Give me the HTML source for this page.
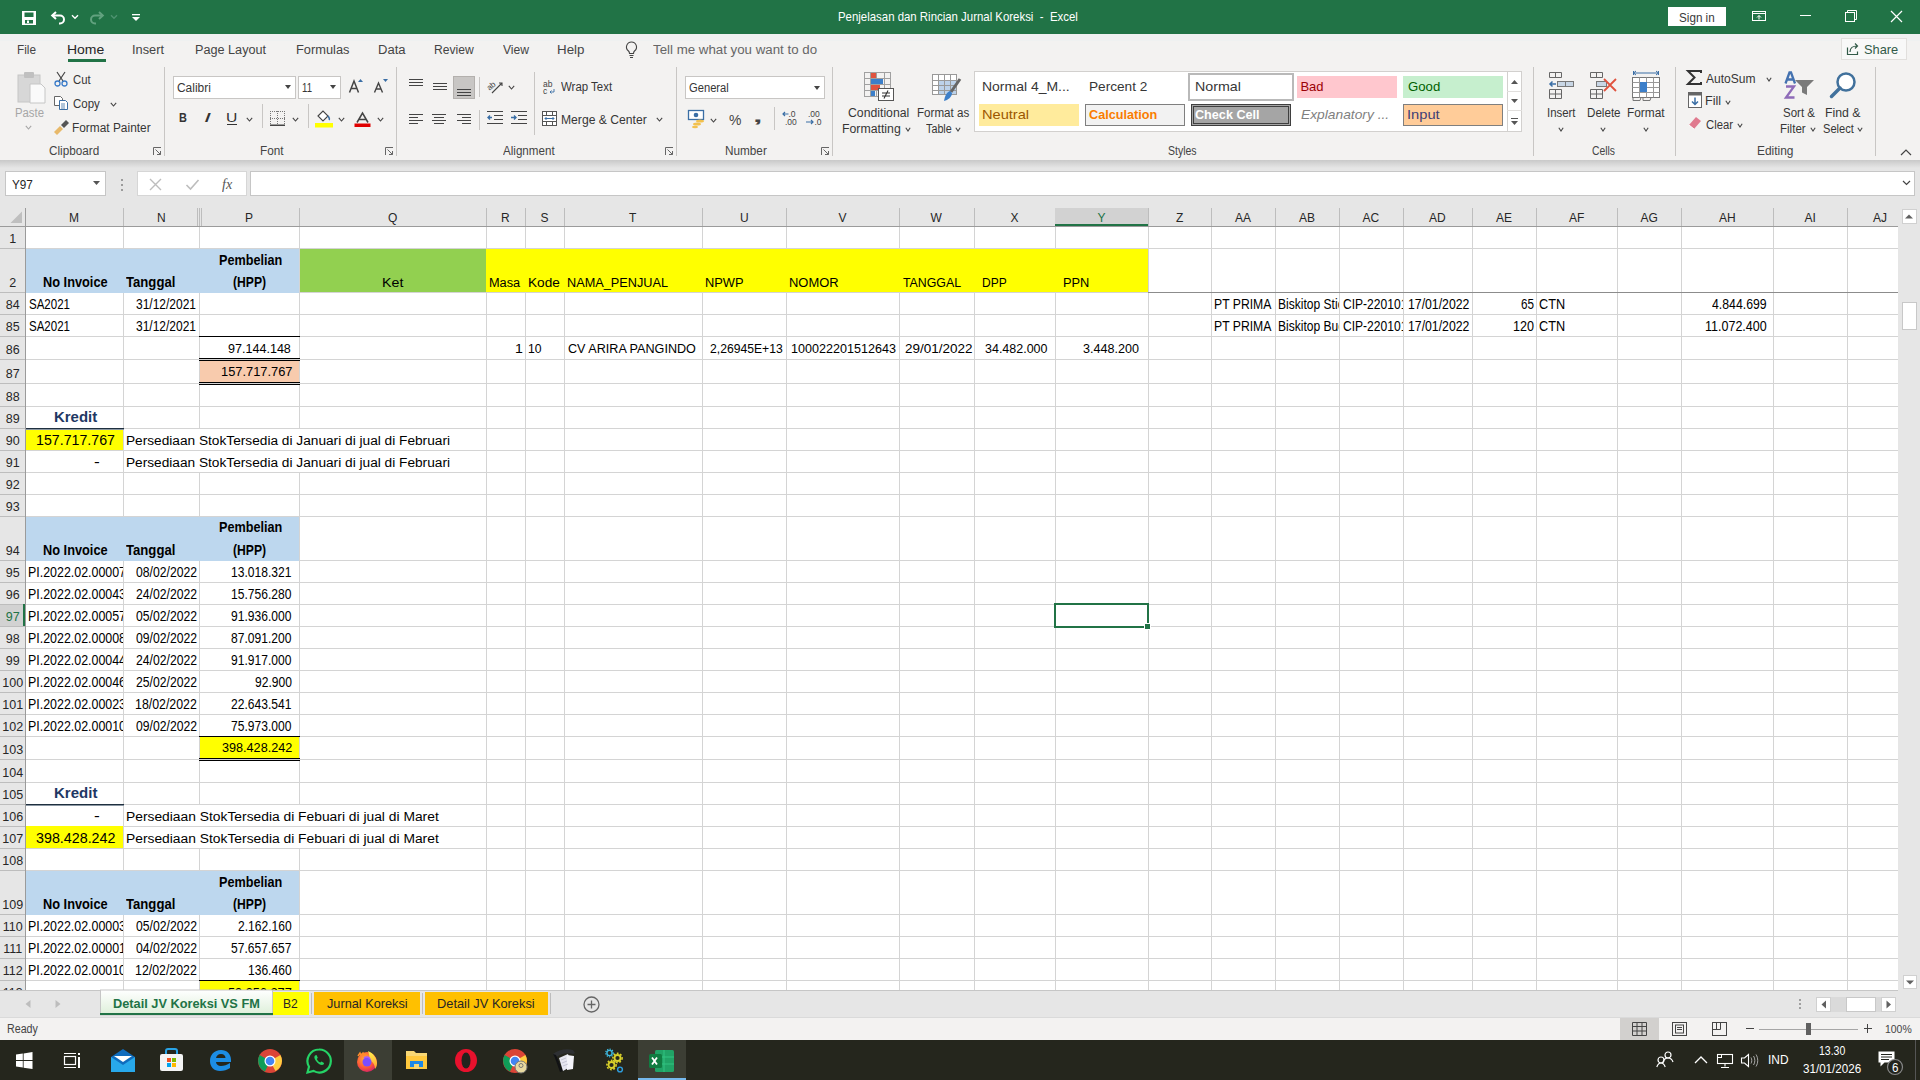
<!DOCTYPE html>
<html><head><meta charset="utf-8"><title>Excel</title>
<style>
html,body{margin:0;padding:0;}
body{width:1920px;height:1080px;overflow:hidden;position:relative;background:#fff;font-family:"Liberation Sans",sans-serif;}
.a{position:absolute;}
.t{white-space:pre;}
svg.a{overflow:visible;}
</style></head><body>
<div class="a" style="left:0px;top:0px;width:1920px;height:34px;background:#217346;"></div>
<div class="a" style="left:0px;top:34px;width:1920px;height:126px;background:#F3F2F1;"></div>
<div class="a" style="left:0px;top:34px;width:1920px;height:7px;background:#EFF1F1;"></div>
<svg class="a" style="left:22px;top:11px;" width="14" height="14" viewBox="0 0 14 14"><path d="M0 0h14v14H0z" fill="#fff"/><rect x="2.5" y="1.5" width="9" height="4.5" fill="#217346"/><rect x="3" y="9" width="8" height="3.5" fill="#217346"/><rect x="5" y="9.5" width="2" height="2.5" fill="#fff"/></svg>
<svg class="a" style="left:50px;top:10px;" width="16" height="16" viewBox="0 0 16 16"><path d="M2.5 5.5h7.5a4 4 0 0 1 0 8H9" fill="none" stroke="#fff" stroke-width="2"/><path d="M6 2L2.2 5.5 6 9" fill="none" stroke="#fff" stroke-width="2"/></svg>
<svg class="a" style="left:71px;top:14px;" width="8" height="6" viewBox="0 0 8 6"><path d="M1 1.2l3 3 3-3" fill="none" stroke="#fff" stroke-width="1.4"/></svg>
<svg class="a" style="left:89px;top:10px;" width="16" height="16" viewBox="0 0 16 16"><path d="M13.5 5.5H6a4 4 0 0 0 0 8h1" fill="none" stroke="#62A27F" stroke-width="2"/><path d="M10 2l3.8 3.5L10 9" fill="none" stroke="#62A27F" stroke-width="2"/></svg>
<svg class="a" style="left:110px;top:14px;" width="8" height="6" viewBox="0 0 8 6"><path d="M1 1.2l3 3 3-3" fill="none" stroke="#4E9270" stroke-width="1.4"/></svg>
<svg class="a" style="left:129px;top:11px;" width="14" height="14" viewBox="0 0 14 14"><rect x="3" y="3" width="8" height="1.3" fill="#fff"/><path d="M3 6h8l-4 4z" fill="#fff"/></svg>
<div class="a t" style="left:838.12px;top:9.89px;font-size:13px;line-height:13px;color:#fff;transform:scaleX(0.8779);transform-origin:left 0;">Penjelasan dan Rincian Jurnal Koreksi  -  Excel</div>
<div class="a" style="left:1668px;top:7px;width:58px;height:19px;background:#fff;"></div>
<div class="a t" style="left:1679.00px;top:10.89px;font-size:13px;line-height:13px;color:#3A3A3A;transform:scaleX(0.8983);transform-origin:left 0;">Sign in</div>
<svg class="a" style="left:1750px;top:9px;" width="18" height="14" viewBox="0 0 18 14"><rect x="2.5" y="2.5" width="13" height="9" fill="none" stroke="#fff" stroke-width="1"/><path d="M2.5 4.5h13" stroke="#fff"/><path d="M9 10.5v-4M7 8.5l2-2 2 2" fill="none" stroke="#fff" stroke-width="1"/></svg>
<div class="a" style="left:1800px;top:15px;width:11px;height:1px;background:#fff;"></div>
<svg class="a" style="left:1844px;top:9px;" width="14" height="14" viewBox="0 0 14 14"><rect x="1.5" y="3.5" width="9" height="9" fill="none" stroke="#fff"/><path d="M3.5 3.5v-2h9v9h-2" fill="none" stroke="#fff"/></svg>
<svg class="a" style="left:1890px;top:10px;" width="14" height="14" viewBox="0 0 14 14"><path d="M1 1l11 11M12 1L1 12" stroke="#fff" stroke-width="1.2"/></svg>
<div class="a t" style="left:16.56px;top:43.51px;font-size:12.5px;line-height:12.5px;color:#444;transform:scaleX(0.9432);transform-origin:left 0;">File</div>
<div class="a t" style="left:67.38px;top:43.51px;font-size:12.5px;line-height:12.5px;color:#262626;transform:scaleX(1.1176);transform-origin:left 0;">Home</div>
<div class="a" style="left:68px;top:59px;width:38px;height:3px;background:#217346;"></div>
<div class="a t" style="left:132.48px;top:43.51px;font-size:12.5px;line-height:12.5px;color:#444;transform:scaleX(1.0231);transform-origin:left 0;">Insert</div>
<div class="a t" style="left:194.99px;top:43.51px;font-size:12.5px;line-height:12.5px;color:#444;transform:scaleX(1.0126);transform-origin:left 0;">Page Layout</div>
<div class="a t" style="left:296.17px;top:43.51px;font-size:12.5px;line-height:12.5px;color:#444;transform:scaleX(1.0267);transform-origin:left 0;">Formulas</div>
<div class="a t" style="left:377.95px;top:43.51px;font-size:12.5px;line-height:12.5px;color:#444;transform:scaleX(1.0451);transform-origin:left 0;">Data</div>
<div class="a t" style="left:434.33px;top:43.51px;font-size:12.5px;line-height:12.5px;color:#444;transform:scaleX(0.9693);transform-origin:left 0;">Review</div>
<div class="a t" style="left:503.00px;top:43.51px;font-size:12.5px;line-height:12.5px;color:#444;transform:scaleX(0.9698);transform-origin:left 0;">View</div>
<div class="a t" style="left:556.93px;top:43.51px;font-size:12.5px;line-height:12.5px;color:#444;transform:scaleX(1.0664);transform-origin:left 0;">Help</div>
<svg class="a" style="left:624px;top:40px;" width="15" height="20" viewBox="0 0 15 20"><path d="M7.5 2a5 5 0 0 0-3 9c.8.7 1 1.5 1 2.5h4c0-1 .2-1.8 1-2.5a5 5 0 0 0-3-9z" fill="none" stroke="#444" stroke-width="1.1"/><path d="M5.5 15.5h4M6 17.5h3" stroke="#444" stroke-width="1.1"/></svg>
<div class="a t" style="left:653.40px;top:43.51px;font-size:12.5px;line-height:12.5px;color:#666;transform:scaleX(1.0635);transform-origin:left 0;">Tell me what you want to do</div>
<div class="a" style="left:1841px;top:38px;width:66px;height:22px;background:#F8F8F8;border:1px solid #E1DFDD;box-sizing:border-box;"></div>
<svg class="a" style="left:1846px;top:42px;" width="14" height="14" viewBox="0 0 14 14"><path d="M1.5 5.5v7h10v-3" fill="none" stroke="#325A48" stroke-width="1.2"/><path d="M4 10c0-4 3-6 7-6M9 1.5l2.5 2.5L9 6.5" fill="none" stroke="#325A48" stroke-width="1.2"/></svg>
<div class="a t" style="left:1864.00px;top:43.39px;font-size:13px;line-height:13px;color:#325A48;transform:scaleX(0.9867);transform-origin:left 0;">Share</div>
<svg class="a" style="left:15px;top:70px;" width="32" height="34" viewBox="0 0 32 34"><rect x="3" y="5" width="22" height="27" fill="#D7D7D7" stroke="#C6C6C6"/><rect x="9" y="2" width="10" height="6" rx="1" fill="#C0C0C0"/><path d="M15 14h11l4 4v15H15z" fill="#FAFAFA" stroke="#C6C6C6"/></svg>
<div class="a t" style="left:14.69px;top:106.81px;font-size:12.5px;line-height:12.5px;color:#A6A6A6;transform:scaleX(0.9061);transform-origin:left 0;">Paste</div>
<svg class="a" style="left:25px;top:125px;" width="7" height="5" viewBox="0 0 7 5"><path d="M0.8 0.8l2.7 3.2l2.7 -3.2" fill="none" stroke="#A6A6A6" stroke-width="1.1"/></svg>
<svg class="a" style="left:53px;top:71px;" width="16" height="16" viewBox="0 0 16 16"><path d="M4 1l6 9M12 1L6 10" stroke="#444" stroke-width="1.2"/><circle cx="4.5" cy="12.5" r="2.5" fill="none" stroke="#3A7BC8" stroke-width="1.3"/><circle cx="11.5" cy="12.5" r="2.5" fill="none" stroke="#3A7BC8" stroke-width="1.3"/></svg>
<div class="a t" style="left:72.50px;top:73.51px;font-size:12.5px;line-height:12.5px;color:#363636;transform:scaleX(0.9060);transform-origin:left 0;">Cut</div>
<svg class="a" style="left:53px;top:95px;" width="16" height="16" viewBox="0 0 16 16"><path d="M1.5 1.5h6l2 2v7h-8z" fill="#fff" stroke="#666"/><path d="M6.5 5.5h6l2 2v7h-8z" fill="#fff" stroke="#3A6EA5"/><path d="M8 9h4M8 11h4M8 13h4" stroke="#3A6EA5" stroke-width=".8"/></svg>
<div class="a t" style="left:72.50px;top:97.71px;font-size:12.5px;line-height:12.5px;color:#363636;transform:scaleX(0.9188);transform-origin:left 0;">Copy</div>
<svg class="a" style="left:110px;top:102px;" width="7" height="5" viewBox="0 0 7 5"><path d="M0.8 0.8l2.7 3.2l2.7 -3.2" fill="none" stroke="#444" stroke-width="1.1"/></svg>
<svg class="a" style="left:53px;top:119px;" width="17" height="16" viewBox="0 0 17 16"><path d="M1 13l6-6 3 3-6 6z" fill="#E8B96A"/><path d="M8 6l5-5 3 3-5 5z" fill="#555"/></svg>
<div class="a t" style="left:71.55px;top:121.71px;font-size:12.5px;line-height:12.5px;color:#363636;transform:scaleX(0.9509);transform-origin:left 0;">Format Painter</div>
<div class="a t" style="left:48.50px;top:145.41px;font-size:12.5px;line-height:12.5px;color:#444;transform:scaleX(0.9374);transform-origin:left 0;">Clipboard</div>
<svg class="a" style="left:153px;top:147px;" width="9" height="9" viewBox="0 0 9 9"><path d="M0.5 8V0.5H8" fill="none" stroke="#666"/><path d="M2.5 2.5l5 5M4 7.5h3.5V4" fill="none" stroke="#666"/></svg>
<div class="a" style="left:164px;top:67px;width:1px;height:89px;background:#C8C6C4;"></div>
<div class="a" style="left:173px;top:76px;width:123px;height:23px;background:#fff;border:1px solid #C8C6C4;box-sizing:border-box;"></div>
<div class="a t" style="left:176.60px;top:81.71px;font-size:12.5px;line-height:12.5px;color:#363636;transform:scaleX(0.9553);transform-origin:left 0;">Calibri</div>
<svg class="a" style="left:285px;top:85px;" width="7" height="5" viewBox="0 0 7 5"><path d="M0 0h6l-3 4z" fill="#444"/></svg>
<div class="a" style="left:298px;top:76px;width:43px;height:23px;background:#fff;border:1px solid #C8C6C4;box-sizing:border-box;"></div>
<div class="a t" style="left:301.90px;top:81.71px;font-size:12.5px;line-height:12.5px;color:#363636;transform:scaleX(0.7678);transform-origin:left 0;">11</div>
<svg class="a" style="left:330px;top:85px;" width="7" height="5" viewBox="0 0 7 5"><path d="M0 0h6l-3 4z" fill="#444"/></svg>
<svg class="a" style="left:348px;top:78px;" width="16" height="16" viewBox="0 0 16 16"><path d="M1.5 14.5L6 3l4.5 11.5M3.2 10.5h5.6" fill="none" stroke="#444" stroke-width="1.5"/><path d="M10 4l2.5-3 2.5 3z" fill="#3A6EA5"/></svg>
<svg class="a" style="left:373px;top:78px;" width="16" height="16" viewBox="0 0 16 16"><path d="M1.5 14.5L5.5 5l4 9.5M3 11h5" fill="none" stroke="#444" stroke-width="1.4"/><path d="M10 1l2.5 3 2.5-3z" fill="#3A6EA5"/></svg>
<div class="a t" style="left:179.40px;top:111.47px;font-size:13.5px;line-height:13.5px;color:#333;font-weight:700;transform:scaleX(0.8100);transform-origin:left 0;">B</div>
<div class="a t" style="left:203.70px;top:111.47px;font-size:13.5px;line-height:13.5px;color:#333;font-style:italic;transform:scaleX(1.8750);transform-origin:left 0;">I</div>
<div class="a t" style="left:225.74px;top:111.47px;font-size:13.5px;line-height:13.5px;color:#333;transform:scaleX(1.1625);transform-origin:left 0;">U</div>
<div class="a" style="left:227px;top:124px;width:10px;height:1.2px;background:#333;"></div>
<svg class="a" style="left:246px;top:117px;" width="7" height="5" viewBox="0 0 7 5"><path d="M0.8 0.8l2.7 3.2l2.7 -3.2" fill="none" stroke="#444" stroke-width="1.1"/></svg>
<div class="a" style="left:262px;top:104px;width:1px;height:24px;background:#C8C6C4;"></div>
<svg class="a" style="left:270px;top:111px;" width="15" height="15" viewBox="0 0 15 15"><rect x="0" y="0" width="1" height="1" fill="#777"/><rect x="0" y="7" width="1" height="1" fill="#777"/><rect x="0" y="0" width="1" height="1" fill="#777"/><rect x="7" y="0" width="1" height="1" fill="#777"/><rect x="14" y="0" width="1" height="1" fill="#777"/><rect x="2" y="0" width="1" height="1" fill="#777"/><rect x="2" y="7" width="1" height="1" fill="#777"/><rect x="0" y="2" width="1" height="1" fill="#777"/><rect x="7" y="2" width="1" height="1" fill="#777"/><rect x="14" y="2" width="1" height="1" fill="#777"/><rect x="4" y="0" width="1" height="1" fill="#777"/><rect x="4" y="7" width="1" height="1" fill="#777"/><rect x="0" y="4" width="1" height="1" fill="#777"/><rect x="7" y="4" width="1" height="1" fill="#777"/><rect x="14" y="4" width="1" height="1" fill="#777"/><rect x="6" y="0" width="1" height="1" fill="#777"/><rect x="6" y="7" width="1" height="1" fill="#777"/><rect x="0" y="6" width="1" height="1" fill="#777"/><rect x="7" y="6" width="1" height="1" fill="#777"/><rect x="14" y="6" width="1" height="1" fill="#777"/><rect x="8" y="0" width="1" height="1" fill="#777"/><rect x="8" y="7" width="1" height="1" fill="#777"/><rect x="0" y="8" width="1" height="1" fill="#777"/><rect x="7" y="8" width="1" height="1" fill="#777"/><rect x="14" y="8" width="1" height="1" fill="#777"/><rect x="10" y="0" width="1" height="1" fill="#777"/><rect x="10" y="7" width="1" height="1" fill="#777"/><rect x="0" y="10" width="1" height="1" fill="#777"/><rect x="7" y="10" width="1" height="1" fill="#777"/><rect x="14" y="10" width="1" height="1" fill="#777"/><rect x="12" y="0" width="1" height="1" fill="#777"/><rect x="12" y="7" width="1" height="1" fill="#777"/><rect x="0" y="12" width="1" height="1" fill="#777"/><rect x="7" y="12" width="1" height="1" fill="#777"/><rect x="14" y="12" width="1" height="1" fill="#777"/><rect x="14" y="0" width="1" height="1" fill="#777"/><rect x="14" y="7" width="1" height="1" fill="#777"/><rect x="0" y="14" width="1" height="1" fill="#777"/><rect x="7" y="14" width="1" height="1" fill="#777"/><rect x="14" y="14" width="1" height="1" fill="#777"/><rect x="0" y="13.5" width="15" height="1.5" fill="#444"/></svg>
<svg class="a" style="left:292px;top:117px;" width="7" height="5" viewBox="0 0 7 5"><path d="M0.8 0.8l2.7 3.2l2.7 -3.2" fill="none" stroke="#444" stroke-width="1.1"/></svg>
<div class="a" style="left:308px;top:104px;width:1px;height:24px;background:#C8C6C4;"></div>
<svg class="a" style="left:314px;top:110px;" width="20" height="18" viewBox="0 0 20 18"><path d="M4 6l5-5 5 5-5 5z" fill="#fff" stroke="#444" stroke-width="1.1"/><path d="M14 6c1.5 2 2 3 1 4" fill="none" stroke="#3A6EA5" stroke-width="1.5"/><rect x="1" y="13" width="18" height="4.5" fill="#FFFF00"/></svg>
<svg class="a" style="left:338px;top:117px;" width="7" height="5" viewBox="0 0 7 5"><path d="M0.8 0.8l2.7 3.2l2.7 -3.2" fill="none" stroke="#444" stroke-width="1.1"/></svg>
<svg class="a" style="left:354px;top:112px;" width="18" height="16" viewBox="0 0 18 16"><path d="M3 10.5L8.5 1l5.5 9.5M5 7.5h7" fill="none" stroke="#444" stroke-width="1.5"/><rect x="0.5" y="11.5" width="16" height="3.5" fill="#E00000"/></svg>
<svg class="a" style="left:377px;top:117px;" width="7" height="5" viewBox="0 0 7 5"><path d="M0.8 0.8l2.7 3.2l2.7 -3.2" fill="none" stroke="#444" stroke-width="1.1"/></svg>
<div class="a t" style="left:259.66px;top:145.41px;font-size:12.5px;line-height:12.5px;color:#444;transform:scaleX(0.9413);transform-origin:left 0;">Font</div>
<svg class="a" style="left:385px;top:147px;" width="9" height="9" viewBox="0 0 9 9"><path d="M0.5 8V0.5H8" fill="none" stroke="#666"/><path d="M2.5 2.5l5 5M4 7.5h3.5V4" fill="none" stroke="#666"/></svg>
<div class="a" style="left:396px;top:67px;width:1px;height:89px;background:#C8C6C4;"></div>
<svg class="a" style="left:409px;top:79px;" width="16" height="12" viewBox="0 0 16 12"><path d="M0 0.5h14" stroke="#444" stroke-width="1"/><path d="M0 3.5h14" stroke="#444" stroke-width="1"/><path d="M0 6.5h14" stroke="#444" stroke-width="1"/></svg>
<svg class="a" style="left:433px;top:83px;" width="16" height="12" viewBox="0 0 16 12"><path d="M0 0.5h14" stroke="#444" stroke-width="1"/><path d="M0 3.5h14" stroke="#444" stroke-width="1"/><path d="M0 6.5h14" stroke="#444" stroke-width="1"/></svg>
<div class="a" style="left:453px;top:76px;width:22px;height:23px;background:#C8C6C4;border:1px solid #B3B0AD;box-sizing:border-box;"></div>
<svg class="a" style="left:457px;top:89px;" width="16" height="12" viewBox="0 0 16 12"><path d="M0 0.5h14" stroke="#444" stroke-width="1"/><path d="M0 3.5h14" stroke="#444" stroke-width="1"/><path d="M0 6.5h14" stroke="#444" stroke-width="1"/></svg>
<div class="a" style="left:479px;top:77px;width:1px;height:20px;background:#C8C6C4;"></div>
<svg class="a" style="left:487px;top:79px;" width="17" height="16" viewBox="0 0 17 16"><text x="0" y="9" font-size="8" font-family="Liberation Sans" fill="#444" transform="rotate(-40 5 7)">ab</text><path d="M5 14l10-10M12 4h3v3" fill="none" stroke="#444" stroke-width="1.1"/></svg>
<svg class="a" style="left:508px;top:85px;" width="7" height="5" viewBox="0 0 7 5"><path d="M0.8 0.8l2.7 3.2l2.7 -3.2" fill="none" stroke="#444" stroke-width="1.1"/></svg>
<svg class="a" style="left:409px;top:114px;" width="16" height="12" viewBox="0 0 16 12"><path d="M0 0.5h14" stroke="#444" stroke-width="1"/><path d="M0 3.5h9" stroke="#444" stroke-width="1"/><path d="M0 6.5h14" stroke="#444" stroke-width="1"/><path d="M0 9.5h9" stroke="#444" stroke-width="1"/></svg>
<svg class="a" style="left:432px;top:114px;" width="16" height="12" viewBox="0 0 16 12"><path d="M0 0.5h14" stroke="#444" stroke-width="1"/><path d="M2 3.5h10" stroke="#444" stroke-width="1"/><path d="M0 6.5h14" stroke="#444" stroke-width="1"/><path d="M2 9.5h10" stroke="#444" stroke-width="1"/></svg>
<svg class="a" style="left:457px;top:114px;" width="16" height="12" viewBox="0 0 16 12"><path d="M0 0.5h14" stroke="#444" stroke-width="1"/><path d="M5 3.5h9" stroke="#444" stroke-width="1"/><path d="M0 6.5h14" stroke="#444" stroke-width="1"/><path d="M5 9.5h9" stroke="#444" stroke-width="1"/></svg>
<div class="a" style="left:479px;top:110px;width:1px;height:20px;background:#C8C6C4;"></div>
<svg class="a" style="left:487px;top:111px;" width="17" height="14" viewBox="0 0 17 14"><path d="M0 0.5h16M7 4.5h9M7 8.5h9M0 12.5h16" stroke="#444"/><path d="M5 6.5H1M3 4.5l-2 2 2 2" fill="none" stroke="#3A6EA5" stroke-width="1.4"/></svg>
<svg class="a" style="left:511px;top:111px;" width="17" height="14" viewBox="0 0 17 14"><path d="M0 0.5h16M7 4.5h9M7 8.5h9M0 12.5h16" stroke="#444"/><path d="M0 6.5h5M3 4.5l2 2-2 2" fill="none" stroke="#3A6EA5" stroke-width="1.4"/></svg>
<div class="a" style="left:534px;top:72px;width:1px;height:63px;background:#C8C6C4;"></div>
<svg class="a" style="left:543px;top:80px;" width="14" height="15" viewBox="0 0 14 15"><text x="0" y="7" font-size="8.5" font-family="Liberation Sans" fill="#444">ab</text><text x="0" y="14" font-size="8.5" font-family="Liberation Sans" fill="#444">c</text><path d="M11 9v3H7M8.5 10.5L7 12l1.5 1.5" fill="none" stroke="#3A6EA5" stroke-width=".9"/></svg>
<div class="a t" style="left:561.10px;top:81.21px;font-size:12.5px;line-height:12.5px;color:#363636;transform:scaleX(0.9158);transform-origin:left 0;">Wrap Text</div>
<svg class="a" style="left:542px;top:111px;" width="16" height="15" viewBox="0 0 16 15"><rect x="0.5" y="0.5" width="14" height="14" fill="#fff" stroke="#555"/><path d="M0.5 4.5h14M0.5 10.5h14M4.5 0.5v4M10.5 0.5v4M4.5 10.5v4M10.5 10.5v4" stroke="#555"/><path d="M3 7.5h9M4.5 6l-1.5 1.5 1.5 1.5M10.5 6l1.5 1.5-1.5 1.5" fill="none" stroke="#3A6EA5"/></svg>
<div class="a t" style="left:560.63px;top:113.51px;font-size:12.5px;line-height:12.5px;color:#363636;transform:scaleX(0.9716);transform-origin:left 0;">Merge &amp; Center</div>
<svg class="a" style="left:656px;top:117px;" width="7" height="5" viewBox="0 0 7 5"><path d="M0.8 0.8l2.7 3.2l2.7 -3.2" fill="none" stroke="#444" stroke-width="1.1"/></svg>
<div class="a t" style="left:502.50px;top:145.41px;font-size:12.5px;line-height:12.5px;color:#444;transform:scaleX(0.9285);transform-origin:left 0;">Alignment</div>
<svg class="a" style="left:665px;top:147px;" width="9" height="9" viewBox="0 0 9 9"><path d="M0.5 8V0.5H8" fill="none" stroke="#666"/><path d="M2.5 2.5l5 5M4 7.5h3.5V4" fill="none" stroke="#666"/></svg>
<div class="a" style="left:676px;top:67px;width:1px;height:89px;background:#C8C6C4;"></div>
<div class="a" style="left:685px;top:76px;width:140px;height:23px;background:#fff;border:1px solid #C8C6C4;box-sizing:border-box;"></div>
<div class="a t" style="left:688.70px;top:81.81px;font-size:12.5px;line-height:12.5px;color:#363636;transform:scaleX(0.8949);transform-origin:left 0;">General</div>
<svg class="a" style="left:814px;top:86px;" width="7" height="5" viewBox="0 0 7 5"><path d="M0 0h6l-3 4z" fill="#444"/></svg>
<svg class="a" style="left:688px;top:110px;" width="18" height="18" viewBox="0 0 18 18"><rect x="0.5" y="0.5" width="15" height="9" fill="#fff" stroke="#3A6EA5" stroke-width="1.3"/><circle cx="8" cy="5" r="2.3" fill="#3A6EA5"/><ellipse cx="12" cy="11" rx="4" ry="1.6" fill="#F2C14E"/><ellipse cx="9" cy="14" rx="4" ry="1.6" fill="#F2C14E"/><ellipse cx="7" cy="17" rx="3" ry="1.3" fill="#F2C14E"/></svg>
<svg class="a" style="left:710px;top:118px;" width="7" height="5" viewBox="0 0 7 5"><path d="M0.8 0.8l2.7 3.2l2.7 -3.2" fill="none" stroke="#444" stroke-width="1.1"/></svg>
<div class="a t" style="left:729.40px;top:112.92px;font-size:14.5px;line-height:14.5px;color:#444;transform:scaleX(0.9615);transform-origin:left 0;">%</div>
<div class="a t" style="left:752.87px;top:109.35px;font-size:16px;line-height:16px;color:#444;font-weight:700;transform:scaleX(2.1333);transform-origin:left 0;">,</div>
<div class="a" style="left:774px;top:107px;width:1px;height:23px;background:#C8C6C4;"></div>
<svg class="a" style="left:782px;top:110px;" width="17" height="16" viewBox="0 0 17 16"><text x="6.5" y="7" font-size="8.5" font-family="Liberation Sans" fill="#444">.0</text><text x="3" y="15" font-size="8.5" font-family="Liberation Sans" fill="#444">.00</text><path d="M6.5 4H1M3 2L1 4l2 2" fill="none" stroke="#3A6EA5" stroke-width="1.2"/></svg>
<svg class="a" style="left:805px;top:110px;" width="17" height="16" viewBox="0 0 17 16"><text x="3" y="7" font-size="8.5" font-family="Liberation Sans" fill="#444">.00</text><text x="9.5" y="15" font-size="8.5" font-family="Liberation Sans" fill="#444">.0</text><path d="M1 12h7M6 10l2 2-2 2" fill="none" stroke="#3A6EA5" stroke-width="1.2"/></svg>
<div class="a t" style="left:725.26px;top:145.41px;font-size:12.5px;line-height:12.5px;color:#444;transform:scaleX(0.9401);transform-origin:left 0;">Number</div>
<svg class="a" style="left:821px;top:147px;" width="9" height="9" viewBox="0 0 9 9"><path d="M0.5 8V0.5H8" fill="none" stroke="#666"/><path d="M2.5 2.5l5 5M4 7.5h3.5V4" fill="none" stroke="#666"/></svg>
<div class="a" style="left:832px;top:67px;width:1px;height:89px;background:#C8C6C4;"></div>
<svg class="a" style="left:863px;top:71px;" width="32" height="32" viewBox="0 0 32 32"><path d="M1 1.5h27M1 7.5h27M1 13.5h27M1 19.5h27M1 25.5h17M1.5 1v25M7.5 1v25M13.5 1v25M21.5 1v17M27.5 1v17" stroke="#A0A0A0" stroke-width="1"/><rect x="8" y="2" width="5" height="5" fill="#E0533F"/><rect x="8" y="8" width="12" height="5" fill="#3C7FC9"/><rect x="8" y="14" width="9" height="5" fill="#E0533F"/><rect x="8" y="20" width="4" height="5" fill="#3C7FC9"/><rect x="15.5" y="17.5" width="15" height="12" fill="#fff" stroke="#555"/><path d="M19 22h8M19 25h8M25 19.5l-4 8" stroke="#333" stroke-width="1.1"/></svg>
<div class="a t" style="left:847.80px;top:106.81px;font-size:12.5px;line-height:12.5px;color:#363636;transform:scaleX(0.9795);transform-origin:left 0;">Conditional</div>
<div class="a t" style="left:842.42px;top:122.51px;font-size:12.5px;line-height:12.5px;color:#363636;transform:scaleX(0.9832);transform-origin:left 0;">Formatting</div>
<svg class="a" style="left:905px;top:127px;" width="6" height="5" viewBox="0 0 6 5"><path d="M0.8 0.8l2.2 3.2l2.2 -3.2" fill="none" stroke="#444" stroke-width="1.1"/></svg>
<svg class="a" style="left:931px;top:73px;" width="32" height="30" viewBox="0 0 32 30"><rect x="1.5" y="1.5" width="24" height="20" fill="#fff" stroke="#999"/><rect x="7" y="7" width="18" height="14" fill="#BCD2EA"/><path d="M1.5 7.5h24M1.5 12.5h24M1.5 17.5h24M7.5 1.5v20M13.5 1.5v20M19.5 1.5v20" stroke="#999"/><path d="M29 6l-9 13" stroke="#666" stroke-width="3"/><path d="M19 18c-3 1-5 4-6 10 4-1 8-4 8-8z" fill="#3C7FC9"/></svg>
<div class="a t" style="left:917.47px;top:106.81px;font-size:12.5px;line-height:12.5px;color:#363636;transform:scaleX(0.9289);transform-origin:left 0;">Format as</div>
<div class="a t" style="left:926.20px;top:122.51px;font-size:12.5px;line-height:12.5px;color:#363636;transform:scaleX(0.8620);transform-origin:left 0;">Table</div>
<svg class="a" style="left:955px;top:127px;" width="6" height="5" viewBox="0 0 6 5"><path d="M0.8 0.8l2.2 3.2l2.2 -3.2" fill="none" stroke="#444" stroke-width="1.1"/></svg>
<div class="a" style="left:974px;top:71px;width:548px;height:61px;background:#fff;border:1px solid #D2D0CE;box-sizing:border-box;"></div>
<div class="a t" style="left:982.33px;top:79.89px;font-size:13px;line-height:13px;color:#363636;transform:scaleX(1.0747);transform-origin:left 0;">Normal 4_M...</div>
<div class="a t" style="left:1088.65px;top:79.89px;font-size:13px;line-height:13px;color:#363636;transform:scaleX(1.0475);transform-origin:left 0;">Percent 2</div>
<div class="a" style="left:1188px;top:73px;width:106px;height:28px;background:#fff;border:2px solid #B9B9B9;box-sizing:border-box;"></div>
<div class="a t" style="left:1194.51px;top:79.89px;font-size:13px;line-height:13px;color:#363636;transform:scaleX(1.0950);transform-origin:left 0;">Normal</div>
<div class="a" style="left:1297px;top:76px;width:100px;height:22px;background:#FFC7CE;"></div>
<div class="a t" style="left:1300.40px;top:79.89px;font-size:13px;line-height:13px;color:#9C0006;">Bad</div>
<div class="a" style="left:1403px;top:76px;width:100px;height:22px;background:#C6EFCE;"></div>
<div class="a t" style="left:1407.70px;top:79.89px;font-size:13px;line-height:13px;color:#006100;transform:scaleX(1.0136);transform-origin:left 0;">Good</div>
<div class="a" style="left:979px;top:104px;width:100px;height:22px;background:#FFEB9C;"></div>
<div class="a t" style="left:982.28px;top:108.39px;font-size:13px;line-height:13px;color:#9C5700;transform:scaleX(1.1239);transform-origin:left 0;">Neutral</div>
<div class="a" style="left:1085px;top:104px;width:100px;height:22px;background:#F2F2F2;border:1px solid #7F7F7F;box-sizing:border-box;"></div>
<div class="a t" style="left:1089.40px;top:108.39px;font-size:13px;line-height:13px;color:#FA7D00;font-weight:700;transform:scaleX(0.9740);transform-origin:left 0;">Calculation</div>
<div class="a" style="left:1191px;top:104px;width:100px;height:22px;background:#A5A5A5;border:3px double #3F3F3F;box-sizing:border-box;"></div>
<div class="a t" style="left:1195.00px;top:108.39px;font-size:13px;line-height:13px;color:#fff;font-weight:700;transform:scaleX(0.9717);transform-origin:left 0;">Check Cell</div>
<div class="a t" style="left:1301.40px;top:108.39px;font-size:13px;line-height:13px;color:#7F7F7F;font-style:italic;transform:scaleX(1.0608);transform-origin:left 0;">Explanatory ...</div>
<div class="a" style="left:1403px;top:104px;width:100px;height:22px;background:#FFCC99;border:1px solid #7F7F7F;box-sizing:border-box;"></div>
<div class="a t" style="left:1406.57px;top:108.39px;font-size:13px;line-height:13px;color:#3F3F76;transform:scaleX(1.1307);transform-origin:left 0;">Input</div>
<div class="a" style="left:1507px;top:71px;width:15px;height:61px;background:#fff;border:1px solid #D2D0CE;box-sizing:border-box;"></div>
<div class="a" style="left:1507px;top:91px;width:15px;height:1px;background:#E1DFDD;"></div>
<div class="a" style="left:1507px;top:110px;width:15px;height:1px;background:#E1DFDD;"></div>
<svg class="a" style="left:1511px;top:79px;" width="8" height="6" viewBox="0 0 8 6"><path d="M0 5h7L3.5 1z" fill="#555"/></svg>
<svg class="a" style="left:1511px;top:98px;" width="8" height="6" viewBox="0 0 8 6"><path d="M0 1h7L3.5 5z" fill="#555"/></svg>
<svg class="a" style="left:1511px;top:117px;" width="8" height="9" viewBox="0 0 8 9"><path d="M0 1.5h7" stroke="#555"/><path d="M0 4h7L3.5 8z" fill="#555"/></svg>
<div class="a t" style="left:1168.30px;top:145.41px;font-size:12.5px;line-height:12.5px;color:#444;transform:scaleX(0.8405);transform-origin:left 0;">Styles</div>
<div class="a" style="left:1533px;top:67px;width:1px;height:89px;background:#C8C6C4;"></div>
<svg class="a" style="left:1548px;top:71px;" width="28" height="28" viewBox="0 0 28 28"><path d="M1.5 1.5h12v5h-12zM7.5 1.5v5M1.5 18.5h12v9h-12zM1.5 23h12M7.5 18.5v9" fill="none" stroke="#666"/><rect x="9.5" y="10.5" width="16" height="5" fill="#C8D6E5" stroke="#777"/><path d="M17.5 10.5v5" stroke="#777"/><path d="M8 13H2M4.5 10.5L2 13l2.5 2.5" fill="none" stroke="#3A6EA5" stroke-width="1.5"/></svg>
<div class="a t" style="left:1546.59px;top:107.21px;font-size:12.5px;line-height:12.5px;color:#363636;transform:scaleX(0.9127);transform-origin:left 0;">Insert</div>
<svg class="a" style="left:1558px;top:127px;" width="6" height="5" viewBox="0 0 6 5"><path d="M0.8 0.8l2.2 3.2l2.2 -3.2" fill="none" stroke="#444" stroke-width="1.1"/></svg>
<svg class="a" style="left:1589px;top:71px;" width="32" height="28" viewBox="0 0 32 28"><path d="M1.5 1.5h12v5h-12zM7.5 1.5v5M1.5 18.5h12v9h-12zM1.5 23h12M7.5 18.5v9" fill="none" stroke="#666"/><rect x="7.5" y="10.5" width="10" height="5" fill="#C8D6E5" stroke="#777"/><path d="M15 8l12 12M27 8L15 20" stroke="#E0533F" stroke-width="1.8"/></svg>
<div class="a t" style="left:1586.57px;top:107.21px;font-size:12.5px;line-height:12.5px;color:#363636;transform:scaleX(0.9295);transform-origin:left 0;">Delete</div>
<svg class="a" style="left:1600px;top:127px;" width="6" height="5" viewBox="0 0 6 5"><path d="M0.8 0.8l2.2 3.2l2.2 -3.2" fill="none" stroke="#444" stroke-width="1.1"/></svg>
<svg class="a" style="left:1632px;top:70px;" width="28" height="32" viewBox="0 0 28 32"><path d="M1.5 3h25M1.5 1v4M26.5 1v4M4 1l-2.5 2L4 5M24 1l2.5 2L24 5" fill="none" stroke="#3A6EA5"/><rect x="0.5" y="7.5" width="27" height="20" fill="#fff" stroke="#777"/><path d="M0.5 12.5h27M0.5 17.5h27M0.5 22.5h27M7.5 7.5v20M14.5 7.5v20M21.5 7.5v20" stroke="#999"/><rect x="8" y="12" width="7" height="10" fill="#3C7FC9"/><path d="M1 27.5v3h7l1-3M11 27.5v3h7l1-3" fill="none" stroke="#777"/></svg>
<div class="a t" style="left:1626.55px;top:107.21px;font-size:12.5px;line-height:12.5px;color:#363636;transform:scaleX(0.9511);transform-origin:left 0;">Format</div>
<svg class="a" style="left:1643px;top:127px;" width="6" height="5" viewBox="0 0 6 5"><path d="M0.8 0.8l2.2 3.2l2.2 -3.2" fill="none" stroke="#444" stroke-width="1.1"/></svg>
<div class="a t" style="left:1592.40px;top:145.41px;font-size:12.5px;line-height:12.5px;color:#444;transform:scaleX(0.8281);transform-origin:left 0;">Cells</div>
<div class="a" style="left:1675px;top:67px;width:1px;height:89px;background:#C8C6C4;"></div>
<svg class="a" style="left:1687px;top:70px;" width="16" height="16" viewBox="0 0 16 16"><path d="M14 3V1H1l6.5 6.5L1 14h13v-2" fill="none" stroke="#333" stroke-width="2"/></svg>
<div class="a t" style="left:1706.20px;top:72.61px;font-size:12.5px;line-height:12.5px;color:#363636;transform:scaleX(0.9627);transform-origin:left 0;">AutoSum</div>
<svg class="a" style="left:1766px;top:77px;" width="6" height="5" viewBox="0 0 6 5"><path d="M0.8 0.8l2.2 3.2l2.2 -3.2" fill="none" stroke="#444" stroke-width="1.1"/></svg>
<svg class="a" style="left:1688px;top:92px;" width="15" height="17" viewBox="0 0 15 17"><rect x="0.5" y="0.5" width="13" height="15" fill="#fff" stroke="#666"/><rect x="0.5" y="0.5" width="13" height="3" fill="#666"/><path d="M7 5.5v7M4 9.5l3 3 3-3" fill="none" stroke="#3A6EA5" stroke-width="1.5"/></svg>
<div class="a t" style="left:1705.19px;top:95.31px;font-size:12.5px;line-height:12.5px;color:#363636;transform:scaleX(1.0078);transform-origin:left 0;">Fill</div>
<svg class="a" style="left:1725px;top:100px;" width="6" height="5" viewBox="0 0 6 5"><path d="M0.8 0.8l2.2 3.2l2.2 -3.2" fill="none" stroke="#444" stroke-width="1.1"/></svg>
<svg class="a" style="left:1688px;top:116px;" width="14" height="14" viewBox="0 0 14 14"><path d="M1 9l7-8 5 4-7 8z" fill="#E07A8F"/><path d="M1 9l5 4" stroke="#fff" stroke-width="1"/></svg>
<div class="a t" style="left:1706.20px;top:118.71px;font-size:12.5px;line-height:12.5px;color:#363636;transform:scaleX(0.9021);transform-origin:left 0;">Clear</div>
<svg class="a" style="left:1737px;top:123px;" width="6" height="5" viewBox="0 0 6 5"><path d="M0.8 0.8l2.2 3.2l2.2 -3.2" fill="none" stroke="#444" stroke-width="1.1"/></svg>
<svg class="a" style="left:1784px;top:71px;" width="31" height="29" viewBox="0 0 31 29"><path d="M1.5 12.5L5.5 1.5h1.5l4 11M3.2 8.5h6.2" fill="none" stroke="#4472B0" stroke-width="2.3"/><path d="M2 15.5h8l-8 11h8.5" fill="none" stroke="#8E6BB8" stroke-width="2.3"/><path d="M11 9h19l-7 7v8l-5-2.5V16z" fill="#7A7A7A"/></svg>
<div class="a t" style="left:1783.40px;top:107.21px;font-size:12.5px;line-height:12.5px;color:#363636;transform:scaleX(0.9210);transform-origin:left 0;">Sort &amp;</div>
<div class="a t" style="left:1780.48px;top:123.01px;font-size:12.5px;line-height:12.5px;color:#363636;transform:scaleX(0.9243);transform-origin:left 0;">Filter</div>
<svg class="a" style="left:1810px;top:127px;" width="6" height="5" viewBox="0 0 6 5"><path d="M0.8 0.8l2.2 3.2l2.2 -3.2" fill="none" stroke="#444" stroke-width="1.1"/></svg>
<svg class="a" style="left:1829px;top:71px;" width="29" height="28" viewBox="0 0 29 28"><circle cx="17" cy="11" r="8.5" fill="#fff" stroke="#41719C" stroke-width="2.5"/><path d="M11 17L2.5 25.5" stroke="#41719C" stroke-width="3.5" stroke-linecap="round"/></svg>
<div class="a t" style="left:1825.42px;top:107.21px;font-size:12.5px;line-height:12.5px;color:#363636;transform:scaleX(0.9835);transform-origin:left 0;">Find &amp;</div>
<div class="a t" style="left:1823.40px;top:123.01px;font-size:12.5px;line-height:12.5px;color:#363636;transform:scaleX(0.8875);transform-origin:left 0;">Select</div>
<svg class="a" style="left:1857px;top:127px;" width="6" height="5" viewBox="0 0 6 5"><path d="M0.8 0.8l2.2 3.2l2.2 -3.2" fill="none" stroke="#444" stroke-width="1.1"/></svg>
<div class="a t" style="left:1756.74px;top:145.41px;font-size:12.5px;line-height:12.5px;color:#444;transform:scaleX(0.9552);transform-origin:left 0;">Editing</div>
<div class="a" style="left:1875px;top:67px;width:1px;height:89px;background:#C8C6C4;"></div>
<svg class="a" style="left:1900px;top:149px;" width="12" height="7" viewBox="0 0 12 7"><path d="M1 6l5-5 5 5" fill="none" stroke="#444" stroke-width="1.2"/></svg>
<div class="a" style="left:0px;top:160px;width:1920px;height:48px;background:#E6E6E6;"></div>
<svg class="a" style="left:0px;top:160px;" width="1920" height="8" viewBox="0 0 1920 8"><defs><linearGradient id="sh" x1="0" y1="0" x2="0" y2="1"><stop offset="0" stop-color="#C9C9C9"/><stop offset="1" stop-color="#E6E6E6"/></linearGradient></defs><rect width="1920" height="8" fill="url(#sh)"/></svg>
<div class="a" style="left:5px;top:171px;width:101px;height:25px;background:#fff;border:1px solid #C6C6C6;box-sizing:border-box;"></div>
<div class="a t" style="left:12.30px;top:177.89px;font-size:13px;line-height:13px;color:#262626;transform:scaleX(0.9039);transform-origin:left 0;">Y97</div>
<svg class="a" style="left:93px;top:181px;" width="8" height="5" viewBox="0 0 8 5"><path d="M0 0h7L3.5 4z" fill="#555"/></svg>
<div class="a" style="left:121px;top:179px;width:2px;height:2px;background:#9B9B9B;"></div>
<div class="a" style="left:121px;top:184px;width:2px;height:2px;background:#9B9B9B;"></div>
<div class="a" style="left:121px;top:189px;width:2px;height:2px;background:#9B9B9B;"></div>
<div class="a" style="left:137px;top:171px;width:110px;height:25px;background:#fff;border:1px solid #D6D6D6;box-sizing:border-box;"></div>
<svg class="a" style="left:149px;top:178px;" width="13" height="13" viewBox="0 0 13 13"><path d="M1 1l11 11M12 1L1 12" stroke="#BDBDBD" stroke-width="1.4"/></svg>
<svg class="a" style="left:185px;top:178px;" width="15" height="13" viewBox="0 0 15 13"><path d="M1.5 7l4 4 8-9" fill="none" stroke="#BDBDBD" stroke-width="1.6"/></svg>
<div class="a t" style="left:222.40px;top:178.04px;font-size:14px;line-height:14px;color:#555;font-style:italic;font-family:'Liberation Serif';transform:scaleX(1.0101);transform-origin:left 0;">fx</div>
<div class="a" style="left:250px;top:171px;width:1665px;height:25px;background:#fff;border:1px solid #C6C6C6;box-sizing:border-box;"></div>
<svg class="a" style="left:1902px;top:180px;" width="9" height="6" viewBox="0 0 9 6"><path d="M1 1l3.5 3.5L8 1" fill="none" stroke="#444" stroke-width="1.2"/></svg>
<div class="a" style="left:0;top:208px;width:1920px;height:782px;overflow:hidden">
<div class="a" style="left:0;top:-208px;width:1920px;height:1080px">
<div class="a" style="left:123px;top:226px;width:1px;height:764px;background:#D4D4D4;"></div>
<div class="a" style="left:199px;top:226px;width:1px;height:764px;background:#D4D4D4;"></div>
<div class="a" style="left:299px;top:226px;width:1px;height:764px;background:#D4D4D4;"></div>
<div class="a" style="left:486px;top:226px;width:1px;height:764px;background:#D4D4D4;"></div>
<div class="a" style="left:525px;top:226px;width:1px;height:764px;background:#D4D4D4;"></div>
<div class="a" style="left:564px;top:226px;width:1px;height:764px;background:#D4D4D4;"></div>
<div class="a" style="left:702px;top:226px;width:1px;height:764px;background:#D4D4D4;"></div>
<div class="a" style="left:786px;top:226px;width:1px;height:764px;background:#D4D4D4;"></div>
<div class="a" style="left:899px;top:226px;width:1px;height:764px;background:#D4D4D4;"></div>
<div class="a" style="left:974px;top:226px;width:1px;height:764px;background:#D4D4D4;"></div>
<div class="a" style="left:1055px;top:226px;width:1px;height:764px;background:#D4D4D4;"></div>
<div class="a" style="left:1148px;top:226px;width:1px;height:764px;background:#D4D4D4;"></div>
<div class="a" style="left:1211px;top:226px;width:1px;height:764px;background:#D4D4D4;"></div>
<div class="a" style="left:1275px;top:226px;width:1px;height:764px;background:#D4D4D4;"></div>
<div class="a" style="left:1339px;top:226px;width:1px;height:764px;background:#D4D4D4;"></div>
<div class="a" style="left:1403px;top:226px;width:1px;height:764px;background:#D4D4D4;"></div>
<div class="a" style="left:1472px;top:226px;width:1px;height:764px;background:#D4D4D4;"></div>
<div class="a" style="left:1536px;top:226px;width:1px;height:764px;background:#D4D4D4;"></div>
<div class="a" style="left:1617px;top:226px;width:1px;height:764px;background:#D4D4D4;"></div>
<div class="a" style="left:1681px;top:226px;width:1px;height:764px;background:#D4D4D4;"></div>
<div class="a" style="left:1773px;top:226px;width:1px;height:764px;background:#D4D4D4;"></div>
<div class="a" style="left:1847px;top:226px;width:1px;height:764px;background:#D4D4D4;"></div>
<div class="a" style="left:25px;top:248px;width:1873px;height:1px;background:#D4D4D4;"></div>
<div class="a" style="left:25px;top:292px;width:1873px;height:1px;background:#D4D4D4;"></div>
<div class="a" style="left:25px;top:314px;width:1873px;height:1px;background:#D4D4D4;"></div>
<div class="a" style="left:25px;top:336px;width:1873px;height:1px;background:#D4D4D4;"></div>
<div class="a" style="left:25px;top:359px;width:1873px;height:1px;background:#D4D4D4;"></div>
<div class="a" style="left:25px;top:383px;width:1873px;height:1px;background:#D4D4D4;"></div>
<div class="a" style="left:25px;top:406px;width:1873px;height:1px;background:#D4D4D4;"></div>
<div class="a" style="left:25px;top:428px;width:1873px;height:1px;background:#D4D4D4;"></div>
<div class="a" style="left:25px;top:450px;width:1873px;height:1px;background:#D4D4D4;"></div>
<div class="a" style="left:25px;top:472px;width:1873px;height:1px;background:#D4D4D4;"></div>
<div class="a" style="left:25px;top:494px;width:1873px;height:1px;background:#D4D4D4;"></div>
<div class="a" style="left:25px;top:516px;width:1873px;height:1px;background:#D4D4D4;"></div>
<div class="a" style="left:25px;top:560px;width:1873px;height:1px;background:#D4D4D4;"></div>
<div class="a" style="left:25px;top:582px;width:1873px;height:1px;background:#D4D4D4;"></div>
<div class="a" style="left:25px;top:604px;width:1873px;height:1px;background:#D4D4D4;"></div>
<div class="a" style="left:25px;top:626px;width:1873px;height:1px;background:#D4D4D4;"></div>
<div class="a" style="left:25px;top:648px;width:1873px;height:1px;background:#D4D4D4;"></div>
<div class="a" style="left:25px;top:670px;width:1873px;height:1px;background:#D4D4D4;"></div>
<div class="a" style="left:25px;top:692px;width:1873px;height:1px;background:#D4D4D4;"></div>
<div class="a" style="left:25px;top:714px;width:1873px;height:1px;background:#D4D4D4;"></div>
<div class="a" style="left:25px;top:736px;width:1873px;height:1px;background:#D4D4D4;"></div>
<div class="a" style="left:25px;top:759px;width:1873px;height:1px;background:#D4D4D4;"></div>
<div class="a" style="left:25px;top:782px;width:1873px;height:1px;background:#D4D4D4;"></div>
<div class="a" style="left:25px;top:804px;width:1873px;height:1px;background:#D4D4D4;"></div>
<div class="a" style="left:25px;top:826px;width:1873px;height:1px;background:#D4D4D4;"></div>
<div class="a" style="left:25px;top:848px;width:1873px;height:1px;background:#D4D4D4;"></div>
<div class="a" style="left:25px;top:870px;width:1873px;height:1px;background:#D4D4D4;"></div>
<div class="a" style="left:25px;top:914px;width:1873px;height:1px;background:#D4D4D4;"></div>
<div class="a" style="left:25px;top:936px;width:1873px;height:1px;background:#D4D4D4;"></div>
<div class="a" style="left:25px;top:958px;width:1873px;height:1px;background:#D4D4D4;"></div>
<div class="a" style="left:25px;top:980px;width:1873px;height:1px;background:#D4D4D4;"></div>
<div class="a" style="left:25px;top:1002px;width:1873px;height:1px;background:#D4D4D4;"></div>
<div class="a" style="left:26px;top:249px;width:273px;height:44px;background:#BDD7EE;"></div>
<div class="a" style="left:26px;top:517px;width:273px;height:44px;background:#BDD7EE;"></div>
<div class="a" style="left:26px;top:871px;width:273px;height:44px;background:#BDD7EE;"></div>
<div class="a" style="left:300px;top:249px;width:186px;height:43px;background:#92D050;"></div>
<div class="a" style="left:486px;top:249px;width:662px;height:43px;background:#FFFF00;"></div>
<div class="a" style="left:1148px;top:292px;width:750px;height:1px;background:#8C8C8C;"></div>
<div class="a" style="left:199px;top:336px;width:101px;height:1px;background:#000;"></div>
<div class="a" style="left:199px;top:358px;width:101px;height:1px;background:#000;"></div>
<div class="a" style="left:199px;top:360px;width:101px;height:1px;background:#000;"></div>
<div class="a" style="left:200px;top:361px;width:99px;height:21px;background:#F8CBAD;"></div>
<div class="a" style="left:199px;top:382px;width:101px;height:1px;background:#000;"></div>
<div class="a" style="left:199px;top:384px;width:101px;height:1px;background:#000;"></div>
<div class="a" style="left:26px;top:429px;width:97px;height:21px;background:#FFFF00;"></div>
<div class="a" style="left:25px;top:428px;width:99px;height:1px;background:#1F2F3F;"></div>
<div class="a" style="left:25px;top:429px;width:99px;height:1px;background:#8A96A2;"></div>
<div class="a" style="left:199px;top:736px;width:101px;height:1px;background:#000;"></div>
<div class="a" style="left:200px;top:737px;width:99px;height:21px;background:#FFFF00;"></div>
<div class="a" style="left:199px;top:758px;width:101px;height:1px;background:#000;"></div>
<div class="a" style="left:199px;top:760px;width:101px;height:1px;background:#000;"></div>
<div class="a" style="left:25px;top:804px;width:99px;height:1px;background:#1F2F3F;"></div>
<div class="a" style="left:25px;top:805px;width:99px;height:1px;background:#8A96A2;"></div>
<div class="a" style="left:25px;top:826px;width:98px;height:22px;background:#FFFF00;"></div>
<div class="a" style="left:199px;top:980px;width:101px;height:1px;background:#000;"></div>
<div class="a" style="left:200px;top:981px;width:99px;height:12px;background:#FFFF00;"></div>
<div class="a t" style="left:228.46px;top:986.30px;font-size:13.7px;line-height:13.7px;color:#000;transform:scaleX(0.9300);transform-origin:left 0;">59.956.277</div>
<div class="a" style="left:124px;top:429px;width:362px;height:21px;background:#fff;"></div>
<div class="a" style="left:124px;top:451px;width:362px;height:21px;background:#fff;"></div>
<div class="a" style="left:124px;top:805px;width:362px;height:21px;background:#fff;"></div>
<div class="a" style="left:124px;top:827px;width:362px;height:21px;background:#fff;"></div>
<div class="a t" style="left:42.50px;top:275.47px;font-size:14.67px;line-height:14.67px;color:#000;font-weight:700;transform:scaleX(0.8721);transform-origin:left 0;">No Invoice</div>
<div class="a t" style="left:126.20px;top:275.47px;font-size:14.67px;line-height:14.67px;color:#000;font-weight:700;transform:scaleX(0.8960);transform-origin:left 0;">Tanggal</div>
<div class="a t" style="left:219.20px;top:252.97px;font-size:14.67px;line-height:14.67px;color:#000;font-weight:700;transform:scaleX(0.8629);transform-origin:left 0;">Pembelian</div>
<div class="a t" style="left:233.00px;top:275.47px;font-size:14.67px;line-height:14.67px;color:#000;font-weight:700;transform:scaleX(0.8297);transform-origin:left 0;">(HPP)</div>
<div class="a t" style="left:42.50px;top:542.97px;font-size:14.67px;line-height:14.67px;color:#000;font-weight:700;transform:scaleX(0.8721);transform-origin:left 0;">No Invoice</div>
<div class="a t" style="left:126.20px;top:542.97px;font-size:14.67px;line-height:14.67px;color:#000;font-weight:700;transform:scaleX(0.8960);transform-origin:left 0;">Tanggal</div>
<div class="a t" style="left:219.20px;top:520.47px;font-size:14.67px;line-height:14.67px;color:#000;font-weight:700;transform:scaleX(0.8629);transform-origin:left 0;">Pembelian</div>
<div class="a t" style="left:233.00px;top:542.97px;font-size:14.67px;line-height:14.67px;color:#000;font-weight:700;transform:scaleX(0.8297);transform-origin:left 0;">(HPP)</div>
<div class="a t" style="left:42.50px;top:896.77px;font-size:14.67px;line-height:14.67px;color:#000;font-weight:700;transform:scaleX(0.8721);transform-origin:left 0;">No Invoice</div>
<div class="a t" style="left:126.20px;top:896.77px;font-size:14.67px;line-height:14.67px;color:#000;font-weight:700;transform:scaleX(0.8960);transform-origin:left 0;">Tanggal</div>
<div class="a t" style="left:219.20px;top:874.97px;font-size:14.67px;line-height:14.67px;color:#000;font-weight:700;transform:scaleX(0.8629);transform-origin:left 0;">Pembelian</div>
<div class="a t" style="left:233.00px;top:896.77px;font-size:14.67px;line-height:14.67px;color:#000;font-weight:700;transform:scaleX(0.8297);transform-origin:left 0;">(HPP)</div>
<div class="a t" style="left:382.16px;top:276.30px;font-size:13.7px;line-height:13.7px;color:#000;transform:scaleX(1.0384);transform-origin:left 0;">Ket</div>
<div class="a t" style="left:488.77px;top:275.50px;font-size:13.7px;line-height:13.7px;color:#000;transform:scaleX(0.9313);transform-origin:left 0;">Masa</div>
<div class="a t" style="left:527.71px;top:275.50px;font-size:13.7px;line-height:13.7px;color:#000;transform:scaleX(0.9949);transform-origin:left 0;">Kode</div>
<div class="a t" style="left:566.87px;top:275.50px;font-size:13.7px;line-height:13.7px;color:#000;transform:scaleX(0.9292);transform-origin:left 0;">NAMA_PENJUAL</div>
<div class="a t" style="left:704.86px;top:275.50px;font-size:13.7px;line-height:13.7px;color:#000;transform:scaleX(0.9391);transform-origin:left 0;">NPWP</div>
<div class="a t" style="left:788.65px;top:275.50px;font-size:13.7px;line-height:13.7px;color:#000;transform:scaleX(0.9461);transform-origin:left 0;">NOMOR</div>
<div class="a t" style="left:902.80px;top:275.50px;font-size:13.7px;line-height:13.7px;color:#000;transform:scaleX(0.9015);transform-origin:left 0;">TANGGAL</div>
<div class="a t" style="left:981.82px;top:275.50px;font-size:13.7px;line-height:13.7px;color:#000;transform:scaleX(0.8773);transform-origin:left 0;">DPP</div>
<div class="a t" style="left:1062.76px;top:275.50px;font-size:13.7px;line-height:13.7px;color:#000;transform:scaleX(0.9368);transform-origin:left 0;">PPN</div>
<div class="a t" style="left:28.50px;top:297.17px;font-size:14.2px;line-height:14.2px;color:#000;transform:scaleX(0.8123);transform-origin:left 0;">SA2021</div>
<div class="a t" style="left:135.60px;top:297.17px;font-size:14.2px;line-height:14.2px;color:#000;transform:scaleX(0.8451);transform-origin:left 0;">31/12/2021</div>
<div class="a t" style="left:1213.74px;top:297.17px;font-size:14.2px;line-height:14.2px;color:#000;transform:scaleX(0.8596);transform-origin:left 0;">PT PRIMA</div>
<div class="a" style="left:1276px;top:292.8px;width:63px;height:20px;overflow:hidden">
<div class="a" style="left:-1276px;top:-292.8px;width:1920px;height:1080px">
<div class="a t" style="left:1277.55px;top:297.17px;font-size:14.2px;line-height:14.2px;color:#000;transform:scaleX(0.8500);transform-origin:left 0;">Biskitop Stick</div>
</div></div>
<div class="a" style="left:1340px;top:292.8px;width:63px;height:20px;overflow:hidden">
<div class="a" style="left:-1340px;top:-292.8px;width:1920px;height:1080px">
<div class="a t" style="left:1342.50px;top:297.17px;font-size:14.2px;line-height:14.2px;color:#000;transform:scaleX(0.8500);transform-origin:left 0;">CIP-220101</div>
</div></div>
<div class="a t" style="left:1408.14px;top:297.17px;font-size:14.2px;line-height:14.2px;color:#000;transform:scaleX(0.8643);transform-origin:left 0;">17/01/2022</div>
<div class="a t" style="left:1520.60px;top:297.17px;font-size:14.2px;line-height:14.2px;color:#000;transform:scaleX(0.8244);transform-origin:left 0;">65</div>
<div class="a t" style="left:1539.40px;top:297.17px;font-size:14.2px;line-height:14.2px;color:#000;transform:scaleX(0.8958);transform-origin:left 0;">CTN</div>
<div class="a t" style="left:1712.20px;top:297.17px;font-size:14.2px;line-height:14.2px;color:#000;transform:scaleX(0.8652);transform-origin:left 0;">4.844.699</div>
<div class="a t" style="left:28.50px;top:318.97px;font-size:14.2px;line-height:14.2px;color:#000;transform:scaleX(0.8123);transform-origin:left 0;">SA2021</div>
<div class="a t" style="left:135.60px;top:318.97px;font-size:14.2px;line-height:14.2px;color:#000;transform:scaleX(0.8451);transform-origin:left 0;">31/12/2021</div>
<div class="a t" style="left:1213.74px;top:318.97px;font-size:14.2px;line-height:14.2px;color:#000;transform:scaleX(0.8596);transform-origin:left 0;">PT PRIMA</div>
<div class="a" style="left:1276px;top:314.6px;width:63px;height:20px;overflow:hidden">
<div class="a" style="left:-1276px;top:-314.6px;width:1920px;height:1080px">
<div class="a t" style="left:1277.55px;top:318.97px;font-size:14.2px;line-height:14.2px;color:#000;transform:scaleX(0.8500);transform-origin:left 0;">Biskitop Buck</div>
</div></div>
<div class="a" style="left:1340px;top:314.6px;width:63px;height:20px;overflow:hidden">
<div class="a" style="left:-1340px;top:-314.6px;width:1920px;height:1080px">
<div class="a t" style="left:1342.50px;top:318.97px;font-size:14.2px;line-height:14.2px;color:#000;transform:scaleX(0.8500);transform-origin:left 0;">CIP-220101</div>
</div></div>
<div class="a t" style="left:1408.14px;top:318.97px;font-size:14.2px;line-height:14.2px;color:#000;transform:scaleX(0.8643);transform-origin:left 0;">17/01/2022</div>
<div class="a t" style="left:1512.61px;top:318.97px;font-size:14.2px;line-height:14.2px;color:#000;transform:scaleX(0.8867);transform-origin:left 0;">120</div>
<div class="a t" style="left:1539.40px;top:318.97px;font-size:14.2px;line-height:14.2px;color:#000;transform:scaleX(0.8958);transform-origin:left 0;">CTN</div>
<div class="a t" style="left:1705.12px;top:318.97px;font-size:14.2px;line-height:14.2px;color:#000;transform:scaleX(0.8818);transform-origin:left 0;">11.072.400</div>
<div class="a t" style="left:228.40px;top:341.60px;font-size:13.7px;line-height:13.7px;color:#000;transform:scaleX(0.9174);transform-origin:left 0;">97.144.148</div>
<div class="a t" style="left:515.27px;top:341.60px;font-size:13.7px;line-height:13.7px;color:#000;transform:scaleX(1.0333);transform-origin:left 0;">1</div>
<div class="a t" style="left:527.81px;top:341.60px;font-size:13.7px;line-height:13.7px;color:#000;transform:scaleX(0.8897);transform-origin:left 0;">10</div>
<div class="a t" style="left:567.50px;top:341.60px;font-size:13.7px;line-height:13.7px;color:#000;transform:scaleX(0.9206);transform-origin:left 0;">CV ARIRA PANGINDO</div>
<div class="a t" style="left:710.00px;top:341.60px;font-size:13.7px;line-height:13.7px;color:#000;transform:scaleX(0.8879);transform-origin:left 0;">2,26945E+13</div>
<div class="a t" style="left:791.28px;top:341.60px;font-size:13.7px;line-height:13.7px;color:#000;transform:scaleX(0.9184);transform-origin:left 0;">100022201512643</div>
<div class="a t" style="left:904.70px;top:341.60px;font-size:13.7px;line-height:13.7px;color:#000;transform:scaleX(0.9839);transform-origin:left 0;">29/01/2022</div>
<div class="a t" style="left:985.00px;top:341.60px;font-size:13.7px;line-height:13.7px;color:#000;transform:scaleX(0.9116);transform-origin:left 0;">34.482.000</div>
<div class="a t" style="left:1083.40px;top:341.60px;font-size:13.7px;line-height:13.7px;color:#000;transform:scaleX(0.9187);transform-origin:left 0;">3.448.200</div>
<div class="a t" style="left:220.96px;top:365.40px;font-size:13.7px;line-height:13.7px;color:#000;transform:scaleX(0.9395);transform-origin:left 0;">157.717.767</div>
<div class="a t" style="left:53.70px;top:409.77px;font-size:14.67px;line-height:14.67px;color:#1F3864;font-weight:700;transform:scaleX(1.0197);transform-origin:left 0;">Kredit</div>
<div class="a t" style="left:53.70px;top:785.77px;font-size:14.67px;line-height:14.67px;color:#1F3864;font-weight:700;transform:scaleX(1.0244);transform-origin:left 0;">Kredit</div>
<div class="a t" style="left:36.33px;top:432.77px;font-size:14.67px;line-height:14.67px;color:#000;transform:scaleX(0.9695);transform-origin:left 0;">157.717.767</div>
<div class="a t" style="left:125.90px;top:433.80px;font-size:13.7px;line-height:13.7px;color:#000;">Persediaan StokTersedia di Januari di jual di Februari</div>
<div class="a t" style="left:94.40px;top:454.77px;font-size:14.67px;line-height:14.67px;color:#000;transform:scaleX(1.1800);transform-origin:left 0;">-</div>
<div class="a t" style="left:125.90px;top:455.80px;font-size:13.7px;line-height:13.7px;color:#000;">Persediaan StokTersedia di Januari di jual di Februari</div>
<div class="a t" style="left:94.40px;top:809.47px;font-size:14.67px;line-height:14.67px;color:#000;transform:scaleX(1.1800);transform-origin:left 0;">-</div>
<div class="a t" style="left:125.89px;top:809.80px;font-size:13.7px;line-height:13.7px;color:#000;transform:scaleX(1.0099);transform-origin:left 0;">Persediaan StokTersedia di Febuari di jual di Maret</div>
<div class="a t" style="left:36.20px;top:831.47px;font-size:14.67px;line-height:14.67px;color:#000;transform:scaleX(0.9748);transform-origin:left 0;">398.428.242</div>
<div class="a t" style="left:125.89px;top:831.80px;font-size:13.7px;line-height:13.7px;color:#000;transform:scaleX(1.0099);transform-origin:left 0;">Persediaan StokTersedia di Febuari di jual di Maret</div>
<div class="a" style="left:26px;top:561px;width:97px;height:21px;overflow:hidden">
<div class="a" style="left:-26px;top:-561px;width:1920px;height:1080px">
<div class="a t" style="left:27.93px;top:564.97px;font-size:14.2px;line-height:14.2px;color:#000;transform:scaleX(0.8750);transform-origin:left 0;">PI.2022.02.00007</div>
</div></div>
<div class="a t" style="left:135.60px;top:564.97px;font-size:14.2px;line-height:14.2px;color:#000;transform:scaleX(0.8592);transform-origin:left 0;">08/02/2022</div>
<div class="a t" style="left:231.45px;top:564.97px;font-size:14.2px;line-height:14.2px;color:#000;transform:scaleX(0.8500);transform-origin:left 0;">13.018.321</div>
<div class="a" style="left:26px;top:583px;width:97px;height:21px;overflow:hidden">
<div class="a" style="left:-26px;top:-583px;width:1920px;height:1080px">
<div class="a t" style="left:27.93px;top:586.97px;font-size:14.2px;line-height:14.2px;color:#000;transform:scaleX(0.8750);transform-origin:left 0;">PI.2022.02.00043</div>
</div></div>
<div class="a t" style="left:135.60px;top:586.97px;font-size:14.2px;line-height:14.2px;color:#000;transform:scaleX(0.8592);transform-origin:left 0;">24/02/2022</div>
<div class="a t" style="left:231.45px;top:586.97px;font-size:14.2px;line-height:14.2px;color:#000;transform:scaleX(0.8500);transform-origin:left 0;">15.756.280</div>
<div class="a" style="left:26px;top:605px;width:97px;height:21px;overflow:hidden">
<div class="a" style="left:-26px;top:-605px;width:1920px;height:1080px">
<div class="a t" style="left:27.93px;top:608.97px;font-size:14.2px;line-height:14.2px;color:#000;transform:scaleX(0.8750);transform-origin:left 0;">PI.2022.02.00057</div>
</div></div>
<div class="a t" style="left:135.60px;top:608.97px;font-size:14.2px;line-height:14.2px;color:#000;transform:scaleX(0.8592);transform-origin:left 0;">05/02/2022</div>
<div class="a t" style="left:231.45px;top:608.97px;font-size:14.2px;line-height:14.2px;color:#000;transform:scaleX(0.8500);transform-origin:left 0;">91.936.000</div>
<div class="a" style="left:26px;top:627px;width:97px;height:21px;overflow:hidden">
<div class="a" style="left:-26px;top:-627px;width:1920px;height:1080px">
<div class="a t" style="left:27.93px;top:630.97px;font-size:14.2px;line-height:14.2px;color:#000;transform:scaleX(0.8750);transform-origin:left 0;">PI.2022.02.00008</div>
</div></div>
<div class="a t" style="left:135.60px;top:630.97px;font-size:14.2px;line-height:14.2px;color:#000;transform:scaleX(0.8592);transform-origin:left 0;">09/02/2022</div>
<div class="a t" style="left:231.45px;top:630.97px;font-size:14.2px;line-height:14.2px;color:#000;transform:scaleX(0.8500);transform-origin:left 0;">87.091.200</div>
<div class="a" style="left:26px;top:649px;width:97px;height:21px;overflow:hidden">
<div class="a" style="left:-26px;top:-649px;width:1920px;height:1080px">
<div class="a t" style="left:27.93px;top:652.97px;font-size:14.2px;line-height:14.2px;color:#000;transform:scaleX(0.8750);transform-origin:left 0;">PI.2022.02.00044</div>
</div></div>
<div class="a t" style="left:135.60px;top:652.97px;font-size:14.2px;line-height:14.2px;color:#000;transform:scaleX(0.8592);transform-origin:left 0;">24/02/2022</div>
<div class="a t" style="left:231.45px;top:652.97px;font-size:14.2px;line-height:14.2px;color:#000;transform:scaleX(0.8500);transform-origin:left 0;">91.917.000</div>
<div class="a" style="left:26px;top:671px;width:97px;height:21px;overflow:hidden">
<div class="a" style="left:-26px;top:-671px;width:1920px;height:1080px">
<div class="a t" style="left:27.93px;top:674.97px;font-size:14.2px;line-height:14.2px;color:#000;transform:scaleX(0.8750);transform-origin:left 0;">PI.2022.02.00046</div>
</div></div>
<div class="a t" style="left:135.60px;top:674.97px;font-size:14.2px;line-height:14.2px;color:#000;transform:scaleX(0.8592);transform-origin:left 0;">25/02/2022</div>
<div class="a t" style="left:254.92px;top:674.97px;font-size:14.2px;line-height:14.2px;color:#000;transform:scaleX(0.8500);transform-origin:left 0;">92.900</div>
<div class="a" style="left:26px;top:693px;width:97px;height:21px;overflow:hidden">
<div class="a" style="left:-26px;top:-693px;width:1920px;height:1080px">
<div class="a t" style="left:27.93px;top:696.97px;font-size:14.2px;line-height:14.2px;color:#000;transform:scaleX(0.8750);transform-origin:left 0;">PI.2022.02.00023</div>
</div></div>
<div class="a t" style="left:134.73px;top:696.97px;font-size:14.2px;line-height:14.2px;color:#000;transform:scaleX(0.8714);transform-origin:left 0;">18/02/2022</div>
<div class="a t" style="left:231.45px;top:696.97px;font-size:14.2px;line-height:14.2px;color:#000;transform:scaleX(0.8500);transform-origin:left 0;">22.643.541</div>
<div class="a" style="left:26px;top:715px;width:97px;height:21px;overflow:hidden">
<div class="a" style="left:-26px;top:-715px;width:1920px;height:1080px">
<div class="a t" style="left:27.93px;top:718.97px;font-size:14.2px;line-height:14.2px;color:#000;transform:scaleX(0.8750);transform-origin:left 0;">PI.2022.02.00010</div>
</div></div>
<div class="a t" style="left:135.60px;top:718.97px;font-size:14.2px;line-height:14.2px;color:#000;transform:scaleX(0.8592);transform-origin:left 0;">09/02/2022</div>
<div class="a t" style="left:231.45px;top:718.97px;font-size:14.2px;line-height:14.2px;color:#000;transform:scaleX(0.8500);transform-origin:left 0;">75.973.000</div>
<div class="a" style="left:26px;top:915px;width:97px;height:21px;overflow:hidden">
<div class="a" style="left:-26px;top:-915px;width:1920px;height:1080px">
<div class="a t" style="left:27.93px;top:918.97px;font-size:14.2px;line-height:14.2px;color:#000;transform:scaleX(0.8750);transform-origin:left 0;">PI.2022.02.00003</div>
</div></div>
<div class="a t" style="left:135.60px;top:918.97px;font-size:14.2px;line-height:14.2px;color:#000;transform:scaleX(0.8592);transform-origin:left 0;">05/02/2022</div>
<div class="a t" style="left:238.16px;top:918.97px;font-size:14.2px;line-height:14.2px;color:#000;transform:scaleX(0.8500);transform-origin:left 0;">2.162.160</div>
<div class="a" style="left:26px;top:937px;width:97px;height:21px;overflow:hidden">
<div class="a" style="left:-26px;top:-937px;width:1920px;height:1080px">
<div class="a t" style="left:27.93px;top:940.97px;font-size:14.2px;line-height:14.2px;color:#000;transform:scaleX(0.8750);transform-origin:left 0;">PI.2022.02.00001</div>
</div></div>
<div class="a t" style="left:135.60px;top:940.97px;font-size:14.2px;line-height:14.2px;color:#000;transform:scaleX(0.8592);transform-origin:left 0;">04/02/2022</div>
<div class="a t" style="left:231.45px;top:940.97px;font-size:14.2px;line-height:14.2px;color:#000;transform:scaleX(0.8500);transform-origin:left 0;">57.657.657</div>
<div class="a" style="left:26px;top:959px;width:97px;height:21px;overflow:hidden">
<div class="a" style="left:-26px;top:-959px;width:1920px;height:1080px">
<div class="a t" style="left:27.93px;top:962.97px;font-size:14.2px;line-height:14.2px;color:#000;transform:scaleX(0.8750);transform-origin:left 0;">PI.2022.02.00010</div>
</div></div>
<div class="a t" style="left:134.73px;top:962.97px;font-size:14.2px;line-height:14.2px;color:#000;transform:scaleX(0.8714);transform-origin:left 0;">12/02/2022</div>
<div class="a t" style="left:248.22px;top:962.97px;font-size:14.2px;line-height:14.2px;color:#000;transform:scaleX(0.8500);transform-origin:left 0;">136.460</div>
<div class="a t" style="left:221.90px;top:741.30px;font-size:13.7px;line-height:13.7px;color:#000;transform:scaleX(0.9231);transform-origin:left 0;">398.428.242</div>
</div></div>
<div class="a" style="left:0px;top:208px;width:1898px;height:18px;background:#E6E6E6;"></div>
<div class="a" style="left:0px;top:226px;width:25px;height:764px;background:#E6E6E6;"></div>
<svg class="a" style="left:9px;top:211px;" width="14" height="13" viewBox="0 0 14 13"><path d="M13 0.5V12H1.5z" fill="#BFBFBF"/></svg>
<div class="a" style="left:123px;top:208px;width:1px;height:18px;background:#BDBDBD;"></div>
<div class="a t" style="left:69.00px;top:211.94px;font-size:12px;line-height:12px;color:#262626;">M</div>
<div class="a" style="left:199px;top:208px;width:1px;height:18px;background:#BDBDBD;"></div>
<div class="a t" style="left:157.00px;top:211.94px;font-size:12px;line-height:12px;color:#262626;">N</div>
<div class="a" style="left:299px;top:208px;width:1px;height:18px;background:#BDBDBD;"></div>
<div class="a t" style="left:245.00px;top:211.94px;font-size:12px;line-height:12px;color:#262626;">P</div>
<div class="a" style="left:486px;top:208px;width:1px;height:18px;background:#BDBDBD;"></div>
<div class="a t" style="left:388.00px;top:211.94px;font-size:12px;line-height:12px;color:#262626;">Q</div>
<div class="a" style="left:525px;top:208px;width:1px;height:18px;background:#BDBDBD;"></div>
<div class="a t" style="left:501.00px;top:211.94px;font-size:12px;line-height:12px;color:#262626;">R</div>
<div class="a" style="left:564px;top:208px;width:1px;height:18px;background:#BDBDBD;"></div>
<div class="a t" style="left:540.50px;top:211.94px;font-size:12px;line-height:12px;color:#262626;">S</div>
<div class="a" style="left:702px;top:208px;width:1px;height:18px;background:#BDBDBD;"></div>
<div class="a t" style="left:629.00px;top:211.94px;font-size:12px;line-height:12px;color:#262626;">T</div>
<div class="a" style="left:786px;top:208px;width:1px;height:18px;background:#BDBDBD;"></div>
<div class="a t" style="left:740.00px;top:211.94px;font-size:12px;line-height:12px;color:#262626;">U</div>
<div class="a" style="left:899px;top:208px;width:1px;height:18px;background:#BDBDBD;"></div>
<div class="a t" style="left:838.50px;top:211.94px;font-size:12px;line-height:12px;color:#262626;">V</div>
<div class="a" style="left:974px;top:208px;width:1px;height:18px;background:#BDBDBD;"></div>
<div class="a t" style="left:930.50px;top:211.94px;font-size:12px;line-height:12px;color:#262626;">W</div>
<div class="a" style="left:1055px;top:208px;width:1px;height:18px;background:#BDBDBD;"></div>
<div class="a t" style="left:1010.50px;top:211.94px;font-size:12px;line-height:12px;color:#262626;">X</div>
<div class="a" style="left:1055px;top:208px;width:93px;height:18px;background:#D2D2D2;"></div>
<div class="a" style="left:1055px;top:224px;width:93px;height:2px;background:#217346;"></div>
<div class="a" style="left:1148px;top:208px;width:1px;height:18px;background:#BDBDBD;"></div>
<div class="a t" style="left:1097.50px;top:211.94px;font-size:12px;line-height:12px;color:#217346;">Y</div>
<div class="a" style="left:1211px;top:208px;width:1px;height:18px;background:#BDBDBD;"></div>
<div class="a t" style="left:1176.00px;top:211.94px;font-size:12px;line-height:12px;color:#262626;">Z</div>
<div class="a" style="left:1275px;top:208px;width:1px;height:18px;background:#BDBDBD;"></div>
<div class="a t" style="left:1235.00px;top:211.94px;font-size:12px;line-height:12px;color:#262626;">AA</div>
<div class="a" style="left:1339px;top:208px;width:1px;height:18px;background:#BDBDBD;"></div>
<div class="a t" style="left:1299.00px;top:211.94px;font-size:12px;line-height:12px;color:#262626;">AB</div>
<div class="a" style="left:1403px;top:208px;width:1px;height:18px;background:#BDBDBD;"></div>
<div class="a t" style="left:1362.50px;top:211.94px;font-size:12px;line-height:12px;color:#262626;">AC</div>
<div class="a" style="left:1472px;top:208px;width:1px;height:18px;background:#BDBDBD;"></div>
<div class="a t" style="left:1429.00px;top:211.94px;font-size:12px;line-height:12px;color:#262626;">AD</div>
<div class="a" style="left:1536px;top:208px;width:1px;height:18px;background:#BDBDBD;"></div>
<div class="a t" style="left:1496.00px;top:211.94px;font-size:12px;line-height:12px;color:#262626;">AE</div>
<div class="a" style="left:1617px;top:208px;width:1px;height:18px;background:#BDBDBD;"></div>
<div class="a t" style="left:1569.00px;top:211.94px;font-size:12px;line-height:12px;color:#262626;">AF</div>
<div class="a" style="left:1681px;top:208px;width:1px;height:18px;background:#BDBDBD;"></div>
<div class="a t" style="left:1640.50px;top:211.94px;font-size:12px;line-height:12px;color:#262626;">AG</div>
<div class="a" style="left:1773px;top:208px;width:1px;height:18px;background:#BDBDBD;"></div>
<div class="a t" style="left:1719.00px;top:211.94px;font-size:12px;line-height:12px;color:#262626;">AH</div>
<div class="a" style="left:1847px;top:208px;width:1px;height:18px;background:#BDBDBD;"></div>
<div class="a t" style="left:1804.50px;top:211.94px;font-size:12px;line-height:12px;color:#262626;">AI</div>
<div class="a t" style="left:1873.00px;top:211.94px;font-size:12px;line-height:12px;color:#262626;">AJ</div>
<div class="a" style="left:197px;top:208px;width:1px;height:18px;background:#BDBDBD;"></div>
<div class="a" style="left:201px;top:208px;width:1px;height:18px;background:#BDBDBD;"></div>
<div class="a" style="left:0px;top:226px;width:1898px;height:1px;background:#9B9B9B;"></div>
<div class="a" style="left:25px;top:208px;width:1px;height:782px;background:#9B9B9B;"></div>
<div class="a" style="left:0;top:226px;width:25px;height:764px;overflow:hidden"><div class="a" style="left:0;top:-226px;width:25px;height:1080px">
<div class="a" style="left:0px;top:248px;width:25px;height:1px;background:#BDBDBD;"></div>
<div class="a t" style="left:9.20px;top:232.51px;font-size:12.5px;line-height:12.5px;color:#262626;">1</div>
<div class="a" style="left:0px;top:292px;width:25px;height:1px;background:#BDBDBD;"></div>
<div class="a t" style="left:9.20px;top:276.51px;font-size:12.5px;line-height:12.5px;color:#262626;">2</div>
<div class="a" style="left:0px;top:314px;width:25px;height:1px;background:#BDBDBD;"></div>
<div class="a t" style="left:5.72px;top:298.51px;font-size:12.5px;line-height:12.5px;color:#262626;">84</div>
<div class="a" style="left:0px;top:336px;width:25px;height:1px;background:#BDBDBD;"></div>
<div class="a t" style="left:5.72px;top:320.51px;font-size:12.5px;line-height:12.5px;color:#262626;">85</div>
<div class="a" style="left:0px;top:359px;width:25px;height:1px;background:#BDBDBD;"></div>
<div class="a t" style="left:5.72px;top:343.51px;font-size:12.5px;line-height:12.5px;color:#262626;">86</div>
<div class="a" style="left:0px;top:383px;width:25px;height:1px;background:#BDBDBD;"></div>
<div class="a t" style="left:5.72px;top:367.51px;font-size:12.5px;line-height:12.5px;color:#262626;">87</div>
<div class="a" style="left:0px;top:406px;width:25px;height:1px;background:#BDBDBD;"></div>
<div class="a t" style="left:5.72px;top:390.51px;font-size:12.5px;line-height:12.5px;color:#262626;">88</div>
<div class="a" style="left:0px;top:428px;width:25px;height:1px;background:#BDBDBD;"></div>
<div class="a t" style="left:5.72px;top:412.51px;font-size:12.5px;line-height:12.5px;color:#262626;">89</div>
<div class="a" style="left:0px;top:450px;width:25px;height:1px;background:#BDBDBD;"></div>
<div class="a t" style="left:5.72px;top:434.51px;font-size:12.5px;line-height:12.5px;color:#262626;">90</div>
<div class="a" style="left:0px;top:472px;width:25px;height:1px;background:#BDBDBD;"></div>
<div class="a t" style="left:5.72px;top:456.51px;font-size:12.5px;line-height:12.5px;color:#262626;">91</div>
<div class="a" style="left:0px;top:494px;width:25px;height:1px;background:#BDBDBD;"></div>
<div class="a t" style="left:5.72px;top:478.51px;font-size:12.5px;line-height:12.5px;color:#262626;">92</div>
<div class="a" style="left:0px;top:516px;width:25px;height:1px;background:#BDBDBD;"></div>
<div class="a t" style="left:5.72px;top:500.51px;font-size:12.5px;line-height:12.5px;color:#262626;">93</div>
<div class="a" style="left:0px;top:560px;width:25px;height:1px;background:#BDBDBD;"></div>
<div class="a t" style="left:5.72px;top:544.51px;font-size:12.5px;line-height:12.5px;color:#262626;">94</div>
<div class="a" style="left:0px;top:582px;width:25px;height:1px;background:#BDBDBD;"></div>
<div class="a t" style="left:5.72px;top:566.51px;font-size:12.5px;line-height:12.5px;color:#262626;">95</div>
<div class="a" style="left:0px;top:604px;width:25px;height:1px;background:#BDBDBD;"></div>
<div class="a t" style="left:5.72px;top:588.51px;font-size:12.5px;line-height:12.5px;color:#262626;">96</div>
<div class="a" style="left:0px;top:605px;width:25px;height:21px;background:#D2D2D2;"></div>
<div class="a" style="left:23px;top:604px;width:2px;height:22px;background:#217346;"></div>
<div class="a" style="left:0px;top:626px;width:25px;height:1px;background:#BDBDBD;"></div>
<div class="a t" style="left:5.72px;top:610.51px;font-size:12.5px;line-height:12.5px;color:#217346;">97</div>
<div class="a" style="left:0px;top:648px;width:25px;height:1px;background:#BDBDBD;"></div>
<div class="a t" style="left:5.72px;top:632.51px;font-size:12.5px;line-height:12.5px;color:#262626;">98</div>
<div class="a" style="left:0px;top:670px;width:25px;height:1px;background:#BDBDBD;"></div>
<div class="a t" style="left:5.72px;top:654.51px;font-size:12.5px;line-height:12.5px;color:#262626;">99</div>
<div class="a" style="left:0px;top:692px;width:25px;height:1px;background:#BDBDBD;"></div>
<div class="a t" style="left:2.25px;top:676.51px;font-size:12.5px;line-height:12.5px;color:#262626;">100</div>
<div class="a" style="left:0px;top:714px;width:25px;height:1px;background:#BDBDBD;"></div>
<div class="a t" style="left:2.25px;top:698.51px;font-size:12.5px;line-height:12.5px;color:#262626;">101</div>
<div class="a" style="left:0px;top:736px;width:25px;height:1px;background:#BDBDBD;"></div>
<div class="a t" style="left:2.25px;top:720.51px;font-size:12.5px;line-height:12.5px;color:#262626;">102</div>
<div class="a" style="left:0px;top:759px;width:25px;height:1px;background:#BDBDBD;"></div>
<div class="a t" style="left:2.25px;top:743.51px;font-size:12.5px;line-height:12.5px;color:#262626;">103</div>
<div class="a" style="left:0px;top:782px;width:25px;height:1px;background:#BDBDBD;"></div>
<div class="a t" style="left:2.25px;top:766.51px;font-size:12.5px;line-height:12.5px;color:#262626;">104</div>
<div class="a" style="left:0px;top:804px;width:25px;height:1px;background:#BDBDBD;"></div>
<div class="a t" style="left:2.25px;top:788.51px;font-size:12.5px;line-height:12.5px;color:#262626;">105</div>
<div class="a" style="left:0px;top:826px;width:25px;height:1px;background:#BDBDBD;"></div>
<div class="a t" style="left:2.25px;top:810.51px;font-size:12.5px;line-height:12.5px;color:#262626;">106</div>
<div class="a" style="left:0px;top:848px;width:25px;height:1px;background:#BDBDBD;"></div>
<div class="a t" style="left:2.25px;top:832.51px;font-size:12.5px;line-height:12.5px;color:#262626;">107</div>
<div class="a" style="left:0px;top:870px;width:25px;height:1px;background:#BDBDBD;"></div>
<div class="a t" style="left:2.25px;top:854.51px;font-size:12.5px;line-height:12.5px;color:#262626;">108</div>
<div class="a" style="left:0px;top:914px;width:25px;height:1px;background:#BDBDBD;"></div>
<div class="a t" style="left:2.25px;top:898.51px;font-size:12.5px;line-height:12.5px;color:#262626;">109</div>
<div class="a" style="left:0px;top:936px;width:25px;height:1px;background:#BDBDBD;"></div>
<div class="a t" style="left:2.71px;top:920.51px;font-size:12.5px;line-height:12.5px;color:#262626;">110</div>
<div class="a" style="left:0px;top:958px;width:25px;height:1px;background:#BDBDBD;"></div>
<div class="a t" style="left:3.18px;top:942.51px;font-size:12.5px;line-height:12.5px;color:#262626;">111</div>
<div class="a" style="left:0px;top:980px;width:25px;height:1px;background:#BDBDBD;"></div>
<div class="a t" style="left:2.71px;top:964.51px;font-size:12.5px;line-height:12.5px;color:#262626;">112</div>
<div class="a" style="left:0px;top:1002px;width:25px;height:1px;background:#BDBDBD;"></div>
<div class="a t" style="left:2.71px;top:986.51px;font-size:12.5px;line-height:12.5px;color:#262626;">113</div>
</div></div>
<div class="a" style="left:1054px;top:603px;width:95px;height:2px;background:#217346;"></div>
<div class="a" style="left:1054px;top:603px;width:2px;height:25px;background:#217346;"></div>
<div class="a" style="left:1054px;top:626px;width:90px;height:2px;background:#217346;"></div>
<div class="a" style="left:1147px;top:603px;width:2px;height:20px;background:#217346;"></div>
<div class="a" style="left:1144px;top:623px;width:7px;height:7px;background:#fff;"></div>
<div class="a" style="left:1145px;top:624px;width:5px;height:5px;background:#217346;"></div>
<div class="a" style="left:1898px;top:208px;width:22px;height:782px;background:#E6E6E6;"></div>
<div class="a" style="left:1902px;top:209px;width:15px;height:15px;background:#fff;border:1px solid #D0D0D0;box-sizing:border-box;"></div>
<svg class="a" style="left:1905px;top:214px;" width="9" height="5" viewBox="0 0 9 5"><path d="M0 4.5h8L4 0.5z" fill="#606060"/></svg>
<div class="a" style="left:1902px;top:302px;width:15px;height:28px;background:#fff;border:1px solid #C8C8C8;box-sizing:border-box;"></div>
<div class="a" style="left:1903px;top:975px;width:14px;height:14px;background:#fff;border:1px solid #D0D0D0;box-sizing:border-box;"></div>
<svg class="a" style="left:1906px;top:980px;" width="9" height="5" viewBox="0 0 9 5"><path d="M0 0.5h8L4 4.5z" fill="#606060"/></svg>
<div class="a" style="left:0px;top:990px;width:1920px;height:27px;background:#E6E6E6;"></div>
<div class="a" style="left:0px;top:990px;width:1898px;height:1px;background:#C6C6C6;"></div>
<svg class="a" style="left:24px;top:999px;" width="8" height="10" viewBox="0 0 8 10"><path d="M6.5 1v8L1.5 5z" fill="#BDBDBD"/></svg>
<svg class="a" style="left:54px;top:999px;" width="8" height="10" viewBox="0 0 8 10"><path d="M1.5 1v8l5-4z" fill="#BDBDBD"/></svg>
<svg class="a" style="left:100px;top:990px;" width="173" height="26" viewBox="0 0 173 26"><defs><linearGradient id="tg" x1="0" y1="0" x2="0" y2="1"><stop offset="0" stop-color="#FFFFFF"/><stop offset="1" stop-color="#DDEFD9"/></linearGradient></defs><rect x="0.5" y="0" width="172" height="25" fill="url(#tg)" stroke="#C6C6C6"/><rect x="0" y="23" width="173" height="2" fill="#217346"/></svg>
<div class="a t" style="left:112.70px;top:997.47px;font-size:13.5px;line-height:13.5px;color:#217346;font-weight:700;transform:scaleX(0.9455);transform-origin:left 0;">Detail JV Koreksi VS FM</div>
<div class="a" style="left:273px;top:992px;width:36px;height:23px;background:#FFFF00;"></div>
<div class="a t" style="left:283.41px;top:997.47px;font-size:13.5px;line-height:13.5px;color:#262626;transform:scaleX(0.8931);transform-origin:left 0;">B2</div>
<div class="a" style="left:311px;top:993px;width:1px;height:21px;background:#BDBDBD;"></div>
<div class="a" style="left:314px;top:992px;width:106px;height:23px;background:#FFC000;"></div>
<div class="a t" style="left:326.70px;top:997.47px;font-size:13.5px;line-height:13.5px;color:#262626;transform:scaleX(0.9423);transform-origin:left 0;">Jurnal Koreksi</div>
<div class="a" style="left:422px;top:993px;width:1px;height:21px;background:#BDBDBD;"></div>
<div class="a" style="left:425px;top:992px;width:123px;height:23px;background:#FFC000;"></div>
<div class="a t" style="left:437.35px;top:997.47px;font-size:13.5px;line-height:13.5px;color:#262626;transform:scaleX(0.9500);transform-origin:left 0;">Detail JV Koreksi</div>
<div class="a" style="left:550px;top:993px;width:1px;height:21px;background:#BDBDBD;"></div>
<svg class="a" style="left:583px;top:996px;" width="18" height="18" viewBox="0 0 18 18"><circle cx="8.5" cy="8.5" r="7.5" fill="none" stroke="#666" stroke-width="1.3"/><path d="M8.5 4.5v8M4.5 8.5h8" stroke="#666" stroke-width="1.3"/></svg>
<div class="a" style="left:1799px;top:999px;width:2px;height:2px;background:#A0A0A0;"></div>
<div class="a" style="left:1799px;top:1003px;width:2px;height:2px;background:#A0A0A0;"></div>
<div class="a" style="left:1799px;top:1007px;width:2px;height:2px;background:#A0A0A0;"></div>
<div class="a" style="left:1816px;top:997px;width:15px;height:15px;background:#fff;border:1px solid #D0D0D0;box-sizing:border-box;"></div>
<svg class="a" style="left:1820px;top:1000px;" width="8" height="9" viewBox="0 0 8 9"><path d="M6 0.5v8L1.5 4.5z" fill="#606060"/></svg>
<div class="a" style="left:1831px;top:997px;width:50px;height:15px;background:#DADADA;"></div>
<div class="a" style="left:1846px;top:997px;width:30px;height:15px;background:#fff;border:1px solid #C8C8C8;box-sizing:border-box;"></div>
<div class="a" style="left:1881px;top:997px;width:15px;height:15px;background:#fff;border:1px solid #D0D0D0;box-sizing:border-box;"></div>
<svg class="a" style="left:1885px;top:1000px;" width="8" height="9" viewBox="0 0 8 9"><path d="M1.5 0.5v8L6 4.5z" fill="#606060"/></svg>
<div class="a" style="left:0px;top:1018px;width:1920px;height:22px;background:#F3F2F1;"></div>
<div class="a" style="left:0px;top:1017px;width:1920px;height:1px;background:#DADADA;"></div>
<div class="a t" style="left:7.44px;top:1022.51px;font-size:12.5px;line-height:12.5px;color:#444;transform:scaleX(0.8556);transform-origin:left 0;">Ready</div>
<div class="a" style="left:1620px;top:1018px;width:39px;height:22px;background:#D2D0CE;"></div>
<svg class="a" style="left:1632px;top:1022px;" width="15" height="14" viewBox="0 0 15 14"><path d="M0.5 0.5h14v13H0.5zM0.5 4.5h14M0.5 9h14M5 0.5v13M10 0.5v13" fill="none" stroke="#444"/></svg>
<svg class="a" style="left:1672px;top:1022px;" width="15" height="14" viewBox="0 0 15 14"><rect x="0.5" y="0.5" width="14" height="13" fill="none" stroke="#444"/><rect x="3.5" y="3" width="8" height="8" fill="none" stroke="#444"/><path d="M5 5.5h5M5 7.5h5" stroke="#444"/></svg>
<svg class="a" style="left:1712px;top:1022px;" width="15" height="14" viewBox="0 0 15 14"><rect x="0.5" y="0.5" width="14" height="13" fill="none" stroke="#444"/><path d="M4.5 0.5v7M8.5 0.5v7M0.5 7.5h8" fill="none" stroke="#444"/></svg>
<div class="a" style="left:1746px;top:1028px;width:8px;height:1px;background:#444;"></div>
<div class="a" style="left:1759px;top:1029px;width:99px;height:1px;background:#A6A6A6;"></div>
<div class="a" style="left:1806px;top:1023px;width:5px;height:12px;background:#606060;"></div>
<div class="a" style="left:1864px;top:1028px;width:8px;height:1px;background:#444;"></div>
<div class="a" style="left:1867px;top:1024px;width:1px;height:9px;background:#444;"></div>
<div class="a t" style="left:1885.00px;top:1023.66px;font-size:11.5px;line-height:11.5px;color:#444;transform:scaleX(0.9079);transform-origin:left 0;">100%</div>
<div class="a" style="left:0px;top:1040px;width:1920px;height:40px;background:#25261D;"></div>
<svg class="a" style="left:16px;top:1052px;" width="17" height="17" viewBox="0 0 17 17"><path d="M0 2.4l6.8-.9v6.6H0zM7.6 1.4L16.5 0v8.1H7.6zM0 8.9h6.8v6.6L0 14.6zM7.6 8.9h8.9V17l-8.9-1.3z" fill="#fff"/></svg>
<svg class="a" style="left:63px;top:1052px;" width="18" height="17" viewBox="0 0 18 17"><path d="M1 1.5h12M1 15.5h12" stroke="#fff" stroke-width="1.2"/><rect x="1.5" y="4.5" width="11" height="8" fill="none" stroke="#fff" stroke-width="1.2"/><rect x="15" y="1" width="2" height="2" fill="#fff"/><rect x="15" y="5" width="2" height="11" fill="#fff"/></svg>
<svg class="a" style="left:110px;top:1049px;" width="26" height="23" viewBox="0 0 26 23"><path d="M1 8l12-8 12 8v15H1z" fill="#0F6CBD"/><path d="M1 8l12 8 12-8v15H1z" fill="#28A8EA"/><path d="M4 7l9 6 9-6" fill="#fff"/></svg>
<svg class="a" style="left:159px;top:1048px;" width="25" height="24" viewBox="0 0 25 24"><path d="M7 6V3a2 2 0 0 1 2-2h7a2 2 0 0 1 2 2v3" fill="none" stroke="#29A3E6" stroke-width="2"/><rect x="1" y="6" width="23" height="17" rx="2" fill="#F4F4F4"/><rect x="8" y="10" width="4" height="4" fill="#F25022"/><rect x="13" y="10" width="4" height="4" fill="#7FBA00"/><rect x="8" y="15" width="4" height="4" fill="#00A4EF"/><rect x="13" y="15" width="4" height="4" fill="#FFB900"/></svg>
<svg class="a" style="left:209px;top:1049px;" width="24" height="23" viewBox="0 0 24 23"><path d="M12 1C5 1 1 6 1 12c0 6 4 10 10 10 4 0 7-1 10-3v-5c-3 2-6 3-9 3-3 0-5-2-5-4h15v-2C22 5 18 1 12 1zm-5 8c.5-2 2-4 5-4s4.5 2 4.5 4z" fill="#1C8DE5"/></svg>
<svg class="a" style="left:257px;top:1048px;" width="26" height="26" viewBox="0 0 26 26"><circle cx="13" cy="13" r="12" fill="#DB4437"/><path d="M13 13L2.6 7A12 12 0 0 0 8 23.5z" fill="#0F9D58"/><path d="M13 13l5.5 10A12 12 0 0 0 25 13 12 12 0 0 0 23.4 7z" fill="#FFCD40"/><circle cx="13" cy="13" r="5.5" fill="#fff"/><circle cx="13" cy="13" r="4.3" fill="#4285F4"/></svg>
<svg class="a" style="left:306px;top:1048px;" width="26" height="26" viewBox="0 0 26 26"><path d="M13 1.5a11.5 11.5 0 0 0-10 17.2L1.5 24.5l6-1.6A11.5 11.5 0 1 0 13 1.5z" fill="none" stroke="#25D366" stroke-width="2.2"/><path d="M9 7.5c-1 1-1 3 1 5.5s4 4 6 4c1.5 0 2-1 2-2l-2.5-1.5-1.2 1c-1.5-.5-3-2-3.5-3.5l1-1.2L10.5 7z" fill="#25D366"/></svg>
<div class="a" style="left:344px;top:1040px;width:48px;height:40px;background:#3C3E34;"></div>
<svg class="a" style="left:354px;top:1047px;" width="27" height="27" viewBox="0 0 27 27"><defs><radialGradient id="ff" cx="0.4" cy="0.35" r="0.7"><stop offset="0" stop-color="#FFB13B"/><stop offset="0.6" stop-color="#FF5A36"/><stop offset="1" stop-color="#D0206A"/></radialGradient><linearGradient id="fy" x1="0" y1="0" x2="0" y2="1"><stop offset="0" stop-color="#FFF44F"/><stop offset="1" stop-color="#FF9A2E"/></linearGradient></defs><circle cx="13" cy="15" r="10" fill="url(#ff)"/><path d="M14 4c5 2 9 7 9 12 0 3-1 5-2 6 0-5-3-8-6-9 1-3 0-6-1-9z" fill="url(#fy)"/><path d="M4 9l2-3 1 2 2-2 1 2 2-1" fill="none" stroke="#FF8C2A" stroke-width="1.5"/><circle cx="13" cy="15" r="4.5" fill="#7A4DFF"/><path d="M10 11c2-2 5-1 6 1" fill="none" stroke="#A35CFF" stroke-width="1.5"/></svg>
<svg class="a" style="left:405px;top:1049px;" width="23" height="22" viewBox="0 0 23 22"><path d="M1 2h8l2 2h11v16H1z" fill="#F8D775"/><path d="M1 7h21v13H1z" fill="#FFC83D"/><rect x="5" y="12" width="13" height="6" fill="#1E88E5"/><rect x="9" y="15" width="5" height="5" fill="#F8D775"/></svg>
<svg class="a" style="left:454px;top:1048px;" width="24" height="25" viewBox="0 0 24 25"><ellipse cx="12" cy="12.5" rx="11" ry="11.5" fill="#E8112D"/><ellipse cx="12" cy="12.5" rx="4.5" ry="8" fill="#22241E"/></svg>
<svg class="a" style="left:502px;top:1048px;" width="26" height="26" viewBox="0 0 26 26"><circle cx="13" cy="13" r="12" fill="#DB4437"/><path d="M13 13L2.6 7A12 12 0 0 0 8 23.5z" fill="#0F9D58"/><path d="M13 13l5.5 10A12 12 0 0 0 25 13 12 12 0 0 0 23.4 7z" fill="#FFCD40"/><circle cx="13" cy="13" r="5.5" fill="#fff"/><circle cx="13" cy="13" r="4.3" fill="#4285F4"/><circle cx="19" cy="19" r="6" fill="#E8D9A0" stroke="#777"/><circle cx="19" cy="17.5" r="2" fill="none" stroke="#777"/></svg>
<svg class="a" style="left:552px;top:1048px;" width="25" height="25" viewBox="0 0 25 25"><path d="M1 6C6 2 14 0 21 2l2 3-2 1C15 4 8 6 3 10z" fill="#2E3033"/><path d="M1 6l2 4 5 14 3-1L4 7z" fill="#111214"/><path d="M7 10l9-4 4 12-9 5z" fill="#E6E6F0"/><path d="M15 7l7 1-1 13-6 1z" fill="#F4F4FA"/><path d="M9 12l5-2M10 15l5-2M11 18l5-2" stroke="#B8B8C8" stroke-width=".7"/></svg>
<svg class="a" style="left:604px;top:1048px;" width="21" height="25" viewBox="0 0 21 25"><g fill="none"><circle cx="5.5" cy="5" r="2.6" stroke="#3EB9E0" stroke-width="1.4"/><circle cx="5.5" cy="5" r="3.8" stroke="#3EB9E0" stroke-width="1.2" stroke-dasharray="1.3 1.2"/><circle cx="13.5" cy="10" r="3" stroke="#D8D02A" stroke-width="1.8"/><circle cx="13.5" cy="10" r="4.6" stroke="#D8D02A" stroke-width="1.6" stroke-dasharray="1.8 1.6"/><circle cx="7.5" cy="17" r="3" stroke="#D8D02A" stroke-width="1.8"/><circle cx="7.5" cy="17" r="4.6" stroke="#D8D02A" stroke-width="1.6" stroke-dasharray="1.8 1.6"/><circle cx="16" cy="21.5" r="2.4" stroke="#2E9FE0" stroke-width="1.4"/></g></svg>
<div class="a" style="left:638px;top:1040px;width:48px;height:40px;background:#3C3E34;"></div>
<div class="a" style="left:638px;top:1078px;width:48px;height:2px;background:#76B9ED;"></div>
<svg class="a" style="left:648px;top:1049px;" width="27" height="24" viewBox="0 0 27 24"><rect x="7" y="1" width="19" height="22" rx="1.5" fill="#21A366"/><path d="M7 8h19M7 15h19M16 1v22" stroke="#33C481" stroke-width="1"/><rect x="1" y="5" width="13" height="14" rx="1.5" fill="#107C41"/><path d="M4 8.5l5 7M9 8.5l-5 7" stroke="#fff" stroke-width="1.8"/></svg>
<svg class="a" style="left:1656px;top:1051px;" width="18" height="17" viewBox="0 0 18 17"><circle cx="12" cy="4" r="3" fill="none" stroke="#fff" stroke-width="1.2"/><path d="M7 11c1-3 3-4 5-4s4 1 5 4" fill="none" stroke="#fff" stroke-width="1.2"/><circle cx="5" cy="9" r="3" fill="none" stroke="#fff" stroke-width="1.2"/><path d="M0.8 16c1-3 2.5-4 4.2-4s3.2 1 4.2 4" fill="none" stroke="#fff" stroke-width="1.2"/></svg>
<svg class="a" style="left:1694px;top:1056px;" width="14" height="8" viewBox="0 0 14 8"><path d="M1 7l6-6 6 6" fill="none" stroke="#fff" stroke-width="1.3"/></svg>
<svg class="a" style="left:1716px;top:1053px;" width="18" height="15" viewBox="0 0 18 15"><rect x="1.5" y="1.5" width="15" height="9" fill="none" stroke="#fff" stroke-width="1.1"/><path d="M9 10.5v3M5 14.5h8" stroke="#fff" stroke-width="1.1"/><rect x="1.5" y="1.5" width="4" height="3" fill="none" stroke="#fff"/></svg>
<svg class="a" style="left:1740px;top:1053px;" width="18" height="15" viewBox="0 0 18 15"><path d="M1.5 5h3l4-3.5v12l-4-3.5h-3z" fill="none" stroke="#fff" stroke-width="1.1"/><path d="M11 4.5c1 1.5 1 4.5 0 6M13.5 3c1.8 2.5 1.8 6.5 0 9M16 1.5c2.3 3.5 2.3 8.5 0 12" fill="none" stroke="#aaa" stroke-width="1"/></svg>
<div class="a t" style="left:1768.25px;top:1053.91px;font-size:12.5px;line-height:12.5px;color:#fff;transform:scaleX(0.9512);transform-origin:left 0;">IND</div>
<div class="a t" style="left:1818.70px;top:1044.51px;font-size:12.5px;line-height:12.5px;color:#fff;transform:scaleX(0.8395);transform-origin:left 0;">13.30</div>
<div class="a t" style="left:1802.80px;top:1062.51px;font-size:12.5px;line-height:12.5px;color:#fff;transform:scaleX(0.9296);transform-origin:left 0;">31/01/2026</div>
<svg class="a" style="left:1877px;top:1050px;" width="28" height="26" viewBox="0 0 28 26"><path d="M1.5 1.5h16v11h-10l-4 4v-4h-2z" fill="#fff"/><path d="M4 4.5h11M4 7h11M4 9.5h8" stroke="#22241E" stroke-width="1"/><circle cx="18" cy="17" r="7.5" fill="#22241E" stroke="#888" stroke-width="1.2"/></svg>
<div class="a t" style="left:1891.50px;top:1061.81px;font-size:12.5px;line-height:12.5px;color:#fff;transform:scaleX(0.9286);transform-origin:left 0;">6</div>
<div class="a" style="left:1915px;top:1040px;width:1px;height:40px;background:#555;"></div>
</body></html>
